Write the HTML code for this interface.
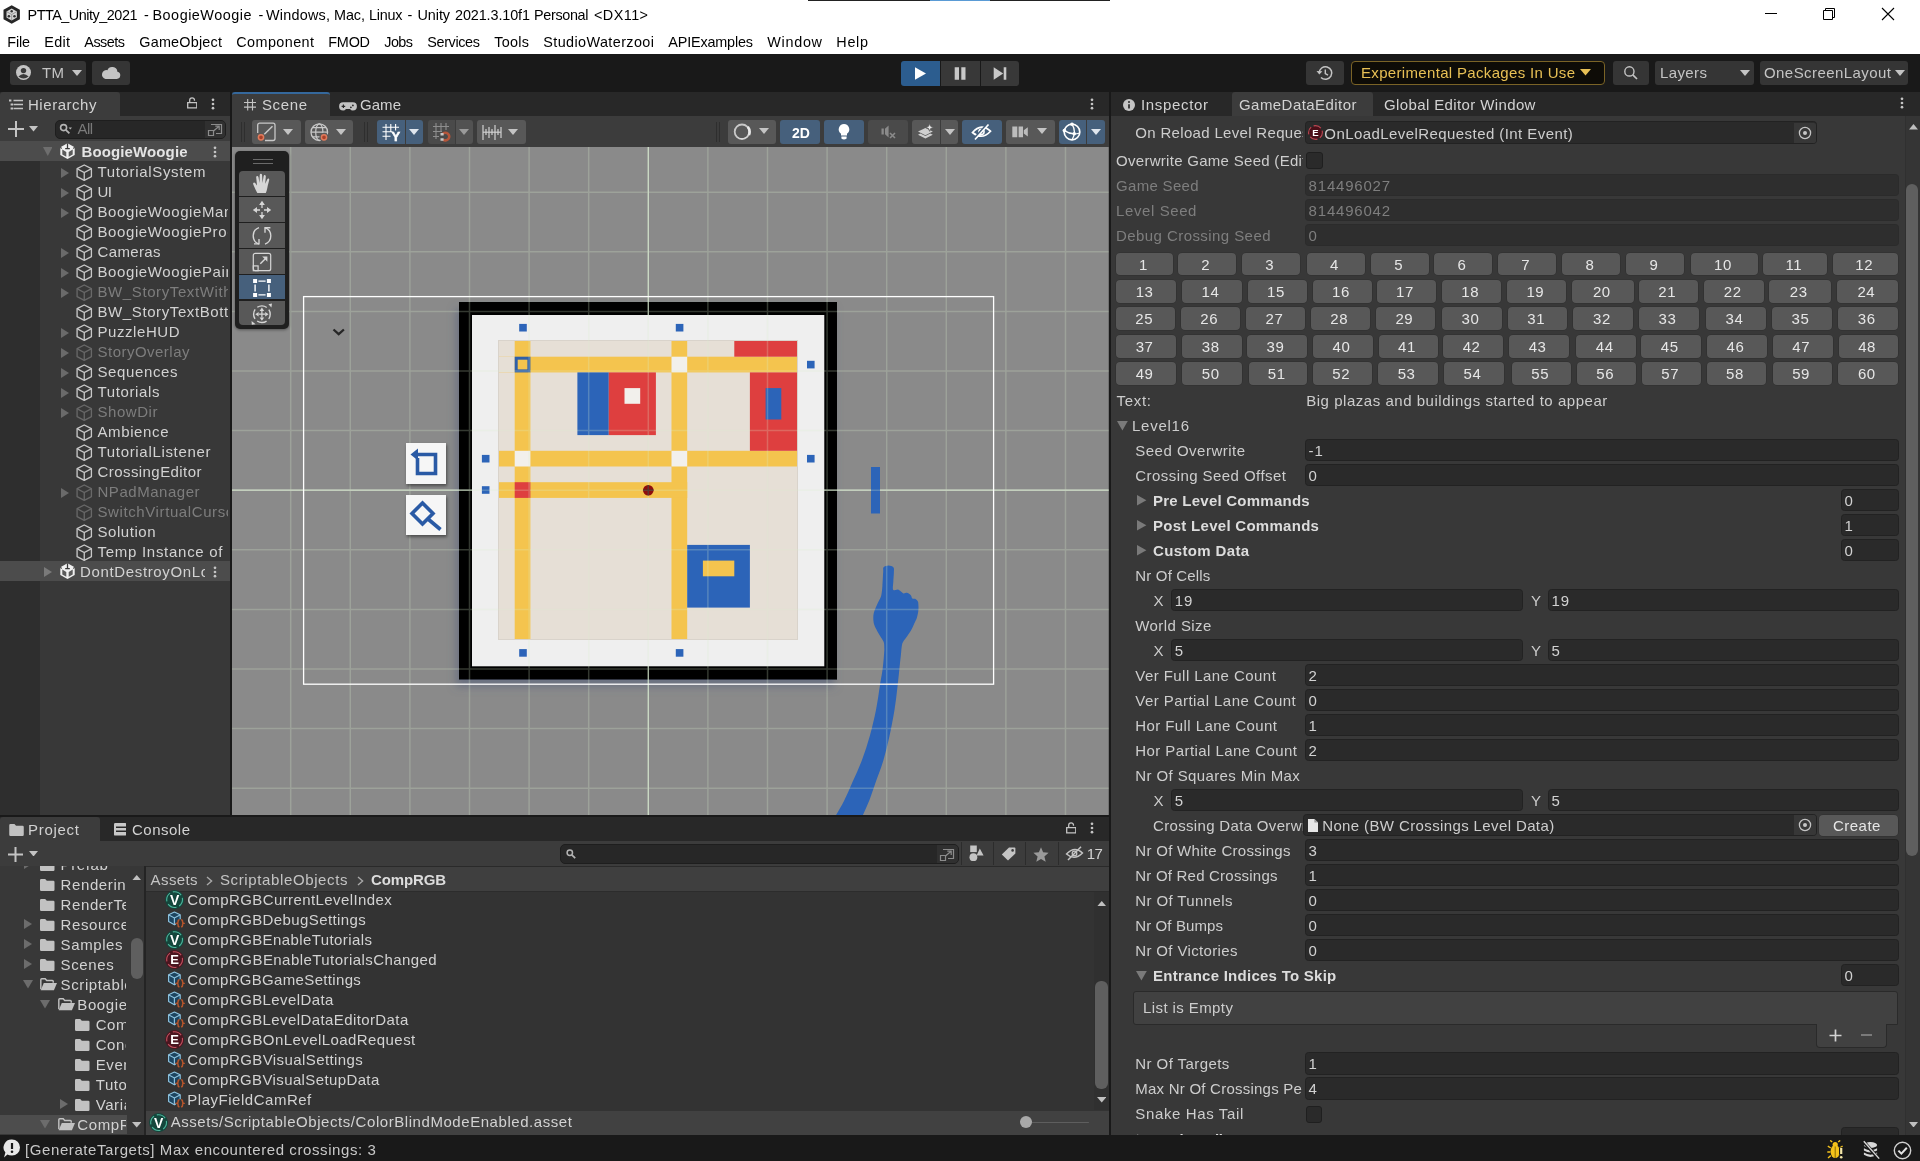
<!DOCTYPE html>
<html><head><meta charset="utf-8"><title>Unity</title>
<style>
html,body{margin:0;padding:0}
body{width:1920px;height:1161px;overflow:hidden;background:#191919;position:relative;font-family:"Liberation Sans",sans-serif;font-size:15px;color:#d2d2d2}
div,span,svg{position:absolute;box-sizing:border-box}
.t{white-space:nowrap;line-height:20px;height:20px;letter-spacing:.5px;color:#d2d2d2}
.b{font-weight:bold;letter-spacing:.25px}
.g{color:#8a8a8a}
.dis{color:#7d7d7d}
.clip{overflow:hidden}
.fld{background:#2a2a2a;border:1px solid #212121;border-radius:3px}
.btn{background:#585858;border-radius:3px;border:1px solid #303030}
.blue{background:#46607c}
.nb{background:#585858;border-radius:4px;text-align:center;color:#e6e6e6;line-height:23px;letter-spacing:.6px;white-space:nowrap;box-shadow:0 0 0 .6px #2f2f2f;padding-right:2.6px}
.tabbar{background:#282828}
.tab{background:#3c3c3c}
</style></head>
<body>
<div id="w" style="left:0;top:0;width:1920px;height:1161px;will-change:transform">
<!-- gen_header -->
<div style="left:0px;top:0px;width:1920px;height:53.5px;background:#fff"></div>
<div style="left:808px;top:0px;width:302px;height:1px;background:#222"></div>
<div style="left:930px;top:0px;width:60px;height:1px;background:#5a9bd5"></div>
<svg style="left:3.4px;top:4.6px;" width="17.4" height="19" viewBox="0 0 17.4 19"><path d="M8.7 0.2L16.9 4.8V14.2L8.7 18.8L0.5 14.2V4.8Z" fill="#262626"/><path d="M8.7 3.6L13.9 6.6V12.4L8.7 15.4L3.5 12.4V6.6Z" fill="#d6d6d6"/><path d="M8.7 9.5V15M8.7 9.5L3.9 6.8M8.7 9.5L13.5 6.8" stroke="#8a8a8a" stroke-width=".8" fill="none"/><circle cx="8.7" cy="6.3" r="1.2" fill="#333"/><circle cx="5.9" cy="11.2" r="1.3" fill="#333"/><circle cx="11.5" cy="11.2" r="1.3" fill="#333"/></svg>
<span class="t " style="left:27.5px;top:4.800000000000001px;letter-spacing:-0.47px;font-size:14.4px;color:#000">PTTA_Unity_2021</span>
<span class="t " style="left:144px;top:4.800000000000001px;letter-spacing:1.20px;font-size:14.4px;color:#000">-</span>
<span class="t " style="left:152.5px;top:4.800000000000001px;letter-spacing:0.51px;font-size:14.4px;color:#000">BoogieWoogie</span>
<span class="t " style="left:258.5px;top:4.800000000000001px;letter-spacing:1.20px;font-size:14.4px;color:#000">-</span>
<span class="t " style="left:266px;top:4.800000000000001px;letter-spacing:0.23px;font-size:14.4px;color:#000">Windows,</span>
<span class="t " style="left:334px;top:4.800000000000001px;letter-spacing:-0.06px;font-size:14.4px;color:#000">Mac,</span>
<span class="t " style="left:369px;top:4.800000000000001px;letter-spacing:-0.23px;font-size:14.4px;color:#000">Linux</span>
<span class="t " style="left:407.5px;top:4.800000000000001px;letter-spacing:1.20px;font-size:14.4px;color:#000">-</span>
<span class="t " style="left:417.5px;top:4.800000000000001px;letter-spacing:-0.07px;font-size:14.4px;color:#000">Unity</span>
<span class="t " style="left:455px;top:4.800000000000001px;letter-spacing:-0.10px;font-size:14.4px;color:#000">2021.3.10f1</span>
<span class="t " style="left:534px;top:4.800000000000001px;letter-spacing:-0.33px;font-size:14.4px;color:#000">Personal</span>
<span class="t " style="left:594px;top:4.800000000000001px;letter-spacing:0.45px;font-size:14.4px;color:#000">&lt;DX11&gt;</span>
<span class="t " style="left:7.3px;top:31.700000000000003px;letter-spacing:-0.17px;font-size:14.4px;color:#000">File</span>
<span class="t " style="left:44.3px;top:31.700000000000003px;letter-spacing:0.30px;font-size:14.4px;color:#000">Edit</span>
<span class="t " style="left:84.3px;top:31.700000000000003px;letter-spacing:-0.50px;font-size:14.4px;color:#000">Assets</span>
<span class="t " style="left:139.3px;top:31.700000000000003px;letter-spacing:0.21px;font-size:14.4px;color:#000">GameObject</span>
<span class="t " style="left:236.3px;top:31.700000000000003px;letter-spacing:0.41px;font-size:14.4px;color:#000">Component</span>
<span class="t " style="left:328.3px;top:31.700000000000003px;letter-spacing:-0.22px;font-size:14.4px;color:#000">FMOD</span>
<span class="t " style="left:384.3px;top:31.700000000000003px;letter-spacing:-0.57px;font-size:14.4px;color:#000">Jobs</span>
<span class="t " style="left:427.3px;top:31.700000000000003px;letter-spacing:-0.36px;font-size:14.4px;color:#000">Services</span>
<span class="t " style="left:494.3px;top:31.700000000000003px;letter-spacing:0.28px;font-size:14.4px;color:#000">Tools</span>
<span class="t " style="left:543.3px;top:31.700000000000003px;letter-spacing:0.40px;font-size:14.4px;color:#000">StudioWaterzooi</span>
<span class="t " style="left:668.3px;top:31.700000000000003px;letter-spacing:-0.17px;font-size:14.4px;color:#000">APIExamples</span>
<span class="t " style="left:767.3px;top:31.700000000000003px;letter-spacing:0.70px;font-size:14.4px;color:#000">Window</span>
<span class="t " style="left:836.3px;top:31.700000000000003px;letter-spacing:0.70px;font-size:14.4px;color:#000">Help</span>
<svg style="left:1760px;top:4px;" width="140" height="22" viewBox="0 0 140 22"><path d="M5 9.5H17" stroke="#000" stroke-width="1"/><path d="M63.5 6.5H72.5V15.5H63.5ZM65.5 6.5V4.5H74.5V13.5H72.5" stroke="#000" stroke-width="1" fill="none"/><path d="M122 4L134 16M134 4L122 16" stroke="#000" stroke-width="1.1"/></svg>
<div style="left:0px;top:53.5px;width:1920px;height:38.5px;background:#191919"></div>
<div style="left:10px;top:61px;width:76px;height:23.5px;background:#353535;border-radius:3px;"></div>
<svg style="left:16px;top:65px;" width="15" height="15" viewBox="0 0 15 15"><circle cx="7.5" cy="7.5" r="7.5" fill="#c4c4c4"/><circle cx="7.5" cy="5.6" r="2.7" fill="#383838"/><path d="M2.4 11.6Q7.5 6.6 12.6 11.6Q7.5 15.6 2.4 11.6Z" fill="#383838"/></svg>
<span class="t " style="left:42px;top:62.5px;letter-spacing:0.33px;color:#c4c4c4">TM</span>
<svg style="left:72.0px;top:70.0px;" width="10" height="6" viewBox="0 0 10 6"><path d="M0 0H10L5.0 6Z" fill="#c4c4c4"/></svg>
<div style="left:92px;top:61px;width:38px;height:23.5px;background:#353535;border-radius:3px;"></div>
<svg style="left:101px;top:65px;" width="20" height="15" viewBox="0 0 20 15"><path d="M4.5 14H15.8A3.7 3.7 0 0 0 16.4 6.7A5.2 5.2 0 0 0 6.4 5.2A4.4 4.4 0 0 0 4.5 14Z" fill="#c4c4c4"/></svg>
<div style="left:901px;top:61px;width:38.5px;height:25px;background:#2c5d8f;border-radius:3px 0 0 3px"></div>
<div style="left:940.5px;top:61px;width:39px;height:25px;background:#383838"></div>
<div style="left:980.5px;top:61px;width:38.5px;height:25px;background:#383838;border-radius:0 3px 3px 0"></div>
<svg style="left:901px;top:61px;" width="118" height="25" viewBox="0 0 118 25"><path d="M14 6.3V18.7L25 12.5Z" fill="#fff"/><path d="M53.7 6.3H58V18.7H53.7ZM60.3 6.3H64.5V18.7H60.3Z" fill="#c8c8c8"/><path d="M92.7 6.3V18.7L102.2 12.5ZM102.7 6.3H105.3V18.7H102.7Z" fill="#c8c8c8"/></svg>
<div style="left:1306px;top:61px;width:37.5px;height:23.5px;background:#353535;border-radius:3px;"></div>
<svg style="left:1316px;top:64px;" width="18" height="18" viewBox="0 0 18 18"><path d="M3.2 9A6.3 6.3 0 1 1 5 13.4" stroke="#c4c4c4" stroke-width="1.5" fill="none"/><path d="M0.5 7L3.3 10.6L6.4 7.2Z" fill="#c4c4c4"/><path d="M9.3 5.5V9.5L12 11.2" stroke="#c4c4c4" stroke-width="1.4" fill="none"/></svg>
<div style="left:1351px;top:60.5px;width:253.5px;height:24.5px;background:#0e0c07;border:1px solid #7a6326;border-radius:4px"></div>
<span class="t " style="left:1361px;top:62.5px;letter-spacing:0.33px;color:#e8c055">Experimental Packages In Use</span>
<svg style="left:1579.5px;top:69.25px;" width="11" height="6.5" viewBox="0 0 11 6.5"><path d="M0 0H11L5.5 6.5Z" fill="#e8c055"/></svg>
<div style="left:1613px;top:61px;width:36px;height:23.5px;background:#353535;border-radius:3px;"></div>
<svg style="left:1623px;top:65px;" width="16" height="16" viewBox="0 0 16 16"><circle cx="6.4" cy="6.4" r="4.6" stroke="#c4c4c4" stroke-width="1.4" fill="none"/><path d="M9.8 9.8L14 14" stroke="#c4c4c4" stroke-width="1.7"/></svg>
<div style="left:1655px;top:61px;width:98.5px;height:23.5px;background:#353535;border-radius:3px;"></div>
<span class="t " style="left:1660px;top:62.5px;letter-spacing:0.39px;color:#c4c4c4">Layers</span>
<svg style="left:1740.0px;top:70.0px;" width="10" height="6" viewBox="0 0 10 6"><path d="M0 0H10L5.0 6Z" fill="#c4c4c4"/></svg>
<div style="left:1760px;top:61px;width:147.5px;height:23.5px;background:#353535;border-radius:3px;"></div>
<span class="t " style="left:1764px;top:62.5px;letter-spacing:0.43px;color:#c4c4c4">OneScreenLayout</span>
<svg style="left:1894.5px;top:70.0px;" width="10" height="6" viewBox="0 0 10 6"><path d="M0 0H10L5.0 6Z" fill="#c4c4c4"/></svg>
<!-- gen_hier -->
<div style="left:0px;top:92px;width:230px;height:723px;background:#383838"></div>
<div class="tabbar" style="left:0px;top:92px;width:230px;height:24px;"></div>
<div class="tab" style="left:0px;top:92px;width:120px;height:24px;border-radius:3px 3px 0 0"></div>
<svg style="left:9px;top:99px;" width="14" height="11" viewBox="0 0 14 11"><path d="M4.5 1.5H14M4.5 5.5H14M4.5 9.5H14" stroke="#c4c4c4" stroke-width="1.5"/><path d="M0 0.6H2.4V2.6H0ZM1.6 4.5H4V6.5H1.6ZM1.6 8.5H4V10.5H1.6Z" fill="#c4c4c4"/></svg>
<span class="t " style="left:28px;top:94.7px;letter-spacing:0.54px;">Hierarchy</span>
<svg style="left:186.7px;top:97.3px;" width="10.5" height="11.5" viewBox="0 0 10.5 11.5"><path d="M0.7 5.6H9.8V10.8H0.7Z" fill="none" stroke="#c4c4c4" stroke-width="1.3"/><path d="M2.7 5.6V3.2A2.4 2.4 0 0 1 7.5 3.2V3.8" fill="none" stroke="#c4c4c4" stroke-width="1.3"/></svg>
<svg style="left:211px;top:97.5px;" width="4" height="12" viewBox="0 0 4 12"><circle cx="2" cy="1.8" r="1.35" fill="#c4c4c4"/><circle cx="2" cy="6" r="1.35" fill="#c4c4c4"/><circle cx="2" cy="10.2" r="1.35" fill="#c4c4c4"/></svg>
<div style="left:0px;top:116px;width:230px;height:25px;background:#3c3c3c"></div>
<svg style="left:8px;top:121px;" width="16" height="16" viewBox="0 0 16 16"><path d="M8 0V16M0 8H16" stroke="#c4c4c4" stroke-width="2"/></svg>
<svg style="left:29.0px;top:126.05000000000001px;" width="9" height="5.5" viewBox="0 0 9 5.5"><path d="M0 0H9L4.5 5.5Z" fill="#c4c4c4"/></svg>
<div style="left:54.5px;top:119.5px;width:171px;height:19px;background:#272727;border:1px solid #1e1e1e;border-radius:5px"></div>
<div style="left:205px;top:120.5px;width:19.5px;height:17px;background:#303030;border-radius:0 4px 4px 0"></div>
<svg style="left:59px;top:123px;" width="14" height="12" viewBox="0 0 14 12"><circle cx="4.6" cy="4.6" r="3" fill="none" stroke="#b4b4b4" stroke-width="1.6"/><path d="M6.8 6.8L10.4 10.4" stroke="#b4b4b4" stroke-width="1.8"/><path d="M9.6 4.4H13L11.3 6.4Z" fill="#b4b4b4"/></svg>
<span class="t " style="left:77.5px;top:119px;letter-spacing:-0.60px;color:#7a7a7a">All</span>
<svg style="left:207px;top:121px;" width="16" height="16" viewBox="0 0 16 16"><path d="M4 3.5H14.5V12.5H9" fill="none" stroke="#8c8c8c" stroke-width="1.2"/><path d="M1.5 9.5H6.5V14.5H1.5Z" fill="none" stroke="#8c8c8c" stroke-width="1.2"/><path d="M6.5 10L11.8 5.5M8.3 5.2H12.2V9" fill="none" stroke="#8c8c8c" stroke-width="1.2"/></svg>
<div style="left:0px;top:161px;width:40px;height:654px;background:#2e2e2e"></div>
<div style="left:0px;top:141px;width:230px;height:20px;background:#4c4c4c"></div>
<svg style="left:42.95px;top:147.1px;" width="9.5" height="9" viewBox="0 0 9.5 9"><path d="M0 0H9.5L4.75 9Z" fill="#6e6e6e"/></svg>
<svg style="left:60px;top:143.3px;" width="15" height="16" viewBox="0 0 15 15.4"><path d="M7.5 0L14.7 3.9V11.7L7.5 15.6L0.3 11.7V3.9Z" fill="#f0f0f0"/><path d="M2.3 6.3L6.3 8.6V13.4L2.3 11.1ZM12.7 6.3L8.7 8.6V13.4L12.7 11.1Z" fill="#5a5a5a"/><path d="M7.5 0V5.6M5.2 5.3H9.8" stroke="#3a3a3a" stroke-width="1.3" fill="none"/><path d="M0 3.2L1.6 5.4M15 3.2L13.4 5.4" stroke="#4c4c4c" stroke-width="1.2"/></svg>
<span class="t b " style="left:81.5px;top:142px;letter-spacing:0.12px;color:#e4e4e4">BoogieWoogie</span>
<svg style="left:212.5px;top:145.5px;" width="4" height="12" viewBox="0 0 4 12"><circle cx="2" cy="1.8" r="1.35" fill="#c4c4c4"/><circle cx="2" cy="6" r="1.35" fill="#c4c4c4"/><circle cx="2" cy="10.2" r="1.35" fill="#c4c4c4"/></svg>
<svg style="left:61.3px;top:167.5px;" width="8" height="10" viewBox="0 0 8 10"><path d="M0 0V10L8 5.0Z" fill="#6a6a6a"/></svg>
<svg style="left:76px;top:163.6px;" width="16.5" height="17.4" viewBox="0 0 16 17"><path d="M8 1L15 4.6V12.4L8 16L1 12.4V4.6Z" fill="none" stroke="#c8c8c8" stroke-width="1.3" stroke-linejoin="round"/><path d="M1.3 4.8L8 8.3L14.7 4.8M8 8.3V15.7" fill="none" stroke="#c8c8c8" stroke-width="1.3"/></svg>
<span class="t " style="left:97.5px;top:162px;letter-spacing:0.66px;color:#d2d2d2">TutorialSystem</span>
<svg style="left:61.3px;top:187.5px;" width="8" height="10" viewBox="0 0 8 10"><path d="M0 0V10L8 5.0Z" fill="#6a6a6a"/></svg>
<svg style="left:76px;top:183.6px;" width="16.5" height="17.4" viewBox="0 0 16 17"><path d="M8 1L15 4.6V12.4L8 16L1 12.4V4.6Z" fill="none" stroke="#c8c8c8" stroke-width="1.3" stroke-linejoin="round"/><path d="M1.3 4.8L8 8.3L14.7 4.8M8 8.3V15.7" fill="none" stroke="#c8c8c8" stroke-width="1.3"/></svg>
<span class="t " style="left:97.5px;top:182px;letter-spacing:-0.60px;color:#d2d2d2">UI</span>
<svg style="left:61.3px;top:207.5px;" width="8" height="10" viewBox="0 0 8 10"><path d="M0 0V10L8 5.0Z" fill="#6a6a6a"/></svg>
<svg style="left:76px;top:203.6px;" width="16.5" height="17.4" viewBox="0 0 16 17"><path d="M8 1L15 4.6V12.4L8 16L1 12.4V4.6Z" fill="none" stroke="#c8c8c8" stroke-width="1.3" stroke-linejoin="round"/><path d="M1.3 4.8L8 8.3L14.7 4.8M8 8.3V15.7" fill="none" stroke="#c8c8c8" stroke-width="1.3"/></svg>
<span class="t clip" style="left:97.5px;top:202px;width:130.5px;letter-spacing:.6px;color:#d2d2d2">BoogieWoogieManager</span>
<svg style="left:76px;top:223.6px;" width="16.5" height="17.4" viewBox="0 0 16 17"><path d="M8 1L15 4.6V12.4L8 16L1 12.4V4.6Z" fill="none" stroke="#c8c8c8" stroke-width="1.3" stroke-linejoin="round"/><path d="M1.3 4.8L8 8.3L14.7 4.8M8 8.3V15.7" fill="none" stroke="#c8c8c8" stroke-width="1.3"/></svg>
<span class="t clip" style="left:97.5px;top:222px;width:130.5px;letter-spacing:.6px;color:#d2d2d2">BoogieWoogieProgress</span>
<svg style="left:61.3px;top:247.5px;" width="8" height="10" viewBox="0 0 8 10"><path d="M0 0V10L8 5.0Z" fill="#6a6a6a"/></svg>
<svg style="left:76px;top:243.6px;" width="16.5" height="17.4" viewBox="0 0 16 17"><path d="M8 1L15 4.6V12.4L8 16L1 12.4V4.6Z" fill="none" stroke="#c8c8c8" stroke-width="1.3" stroke-linejoin="round"/><path d="M1.3 4.8L8 8.3L14.7 4.8M8 8.3V15.7" fill="none" stroke="#c8c8c8" stroke-width="1.3"/></svg>
<span class="t " style="left:97.5px;top:242px;letter-spacing:0.36px;color:#d2d2d2">Cameras</span>
<svg style="left:61.3px;top:267.5px;" width="8" height="10" viewBox="0 0 8 10"><path d="M0 0V10L8 5.0Z" fill="#6a6a6a"/></svg>
<svg style="left:76px;top:263.6px;" width="16.5" height="17.4" viewBox="0 0 16 17"><path d="M8 1L15 4.6V12.4L8 16L1 12.4V4.6Z" fill="none" stroke="#c8c8c8" stroke-width="1.3" stroke-linejoin="round"/><path d="M1.3 4.8L8 8.3L14.7 4.8M8 8.3V15.7" fill="none" stroke="#c8c8c8" stroke-width="1.3"/></svg>
<span class="t clip" style="left:97.5px;top:262px;width:130.5px;letter-spacing:.6px;color:#d2d2d2">BoogieWoogiePainting</span>
<svg style="left:61.3px;top:287.5px;" width="8" height="10" viewBox="0 0 8 10"><path d="M0 0V10L8 5.0Z" fill="#6a6a6a"/></svg>
<svg style="left:76px;top:283.6px;" width="16.5" height="17.4" viewBox="0 0 16 17"><path d="M8 1L15 4.6V12.4L8 16L1 12.4V4.6Z" fill="none" stroke="#686868" stroke-width="1.3" stroke-linejoin="round"/><path d="M1.3 4.8L8 8.3L14.7 4.8M8 8.3V15.7" fill="none" stroke="#686868" stroke-width="1.3"/></svg>
<span class="t clip" style="left:97.5px;top:282px;width:130.5px;letter-spacing:.6px;color:#7d7d7d">BW_StoryTextWithImage</span>
<svg style="left:76px;top:303.6px;" width="16.5" height="17.4" viewBox="0 0 16 17"><path d="M8 1L15 4.6V12.4L8 16L1 12.4V4.6Z" fill="none" stroke="#c8c8c8" stroke-width="1.3" stroke-linejoin="round"/><path d="M1.3 4.8L8 8.3L14.7 4.8M8 8.3V15.7" fill="none" stroke="#c8c8c8" stroke-width="1.3"/></svg>
<span class="t clip" style="left:97.5px;top:302px;width:130.5px;letter-spacing:.6px;color:#d2d2d2">BW_StoryTextBottom</span>
<svg style="left:61.3px;top:327.5px;" width="8" height="10" viewBox="0 0 8 10"><path d="M0 0V10L8 5.0Z" fill="#6a6a6a"/></svg>
<svg style="left:76px;top:323.6px;" width="16.5" height="17.4" viewBox="0 0 16 17"><path d="M8 1L15 4.6V12.4L8 16L1 12.4V4.6Z" fill="none" stroke="#c8c8c8" stroke-width="1.3" stroke-linejoin="round"/><path d="M1.3 4.8L8 8.3L14.7 4.8M8 8.3V15.7" fill="none" stroke="#c8c8c8" stroke-width="1.3"/></svg>
<span class="t " style="left:97.5px;top:322px;letter-spacing:0.56px;color:#d2d2d2">PuzzleHUD</span>
<svg style="left:61.3px;top:347.5px;" width="8" height="10" viewBox="0 0 8 10"><path d="M0 0V10L8 5.0Z" fill="#6a6a6a"/></svg>
<svg style="left:76px;top:343.6px;" width="16.5" height="17.4" viewBox="0 0 16 17"><path d="M8 1L15 4.6V12.4L8 16L1 12.4V4.6Z" fill="none" stroke="#686868" stroke-width="1.3" stroke-linejoin="round"/><path d="M1.3 4.8L8 8.3L14.7 4.8M8 8.3V15.7" fill="none" stroke="#686868" stroke-width="1.3"/></svg>
<span class="t " style="left:97.5px;top:342px;letter-spacing:0.48px;color:#7d7d7d">StoryOverlay</span>
<svg style="left:61.3px;top:367.5px;" width="8" height="10" viewBox="0 0 8 10"><path d="M0 0V10L8 5.0Z" fill="#6a6a6a"/></svg>
<svg style="left:76px;top:363.6px;" width="16.5" height="17.4" viewBox="0 0 16 17"><path d="M8 1L15 4.6V12.4L8 16L1 12.4V4.6Z" fill="none" stroke="#c8c8c8" stroke-width="1.3" stroke-linejoin="round"/><path d="M1.3 4.8L8 8.3L14.7 4.8M8 8.3V15.7" fill="none" stroke="#c8c8c8" stroke-width="1.3"/></svg>
<span class="t " style="left:97.5px;top:362px;letter-spacing:0.62px;color:#d2d2d2">Sequences</span>
<svg style="left:61.3px;top:387.5px;" width="8" height="10" viewBox="0 0 8 10"><path d="M0 0V10L8 5.0Z" fill="#6a6a6a"/></svg>
<svg style="left:76px;top:383.6px;" width="16.5" height="17.4" viewBox="0 0 16 17"><path d="M8 1L15 4.6V12.4L8 16L1 12.4V4.6Z" fill="none" stroke="#c8c8c8" stroke-width="1.3" stroke-linejoin="round"/><path d="M1.3 4.8L8 8.3L14.7 4.8M8 8.3V15.7" fill="none" stroke="#c8c8c8" stroke-width="1.3"/></svg>
<span class="t " style="left:97.5px;top:382px;letter-spacing:0.63px;color:#d2d2d2">Tutorials</span>
<svg style="left:61.3px;top:407.5px;" width="8" height="10" viewBox="0 0 8 10"><path d="M0 0V10L8 5.0Z" fill="#6a6a6a"/></svg>
<svg style="left:76px;top:403.6px;" width="16.5" height="17.4" viewBox="0 0 16 17"><path d="M8 1L15 4.6V12.4L8 16L1 12.4V4.6Z" fill="none" stroke="#686868" stroke-width="1.3" stroke-linejoin="round"/><path d="M1.3 4.8L8 8.3L14.7 4.8M8 8.3V15.7" fill="none" stroke="#686868" stroke-width="1.3"/></svg>
<span class="t " style="left:97.5px;top:402px;letter-spacing:0.55px;color:#7d7d7d">ShowDir</span>
<svg style="left:76px;top:423.6px;" width="16.5" height="17.4" viewBox="0 0 16 17"><path d="M8 1L15 4.6V12.4L8 16L1 12.4V4.6Z" fill="none" stroke="#c8c8c8" stroke-width="1.3" stroke-linejoin="round"/><path d="M1.3 4.8L8 8.3L14.7 4.8M8 8.3V15.7" fill="none" stroke="#c8c8c8" stroke-width="1.3"/></svg>
<span class="t " style="left:97.5px;top:422px;letter-spacing:0.61px;color:#d2d2d2">Ambience</span>
<svg style="left:76px;top:443.6px;" width="16.5" height="17.4" viewBox="0 0 16 17"><path d="M8 1L15 4.6V12.4L8 16L1 12.4V4.6Z" fill="none" stroke="#c8c8c8" stroke-width="1.3" stroke-linejoin="round"/><path d="M1.3 4.8L8 8.3L14.7 4.8M8 8.3V15.7" fill="none" stroke="#c8c8c8" stroke-width="1.3"/></svg>
<span class="t " style="left:97.5px;top:442px;letter-spacing:0.68px;color:#d2d2d2">TutorialListener</span>
<svg style="left:76px;top:463.6px;" width="16.5" height="17.4" viewBox="0 0 16 17"><path d="M8 1L15 4.6V12.4L8 16L1 12.4V4.6Z" fill="none" stroke="#c8c8c8" stroke-width="1.3" stroke-linejoin="round"/><path d="M1.3 4.8L8 8.3L14.7 4.8M8 8.3V15.7" fill="none" stroke="#c8c8c8" stroke-width="1.3"/></svg>
<span class="t " style="left:97.5px;top:462px;letter-spacing:0.43px;color:#d2d2d2">CrossingEditor</span>
<svg style="left:61.3px;top:487.5px;" width="8" height="10" viewBox="0 0 8 10"><path d="M0 0V10L8 5.0Z" fill="#6a6a6a"/></svg>
<svg style="left:76px;top:483.6px;" width="16.5" height="17.4" viewBox="0 0 16 17"><path d="M8 1L15 4.6V12.4L8 16L1 12.4V4.6Z" fill="none" stroke="#686868" stroke-width="1.3" stroke-linejoin="round"/><path d="M1.3 4.8L8 8.3L14.7 4.8M8 8.3V15.7" fill="none" stroke="#686868" stroke-width="1.3"/></svg>
<span class="t " style="left:97.5px;top:482px;letter-spacing:0.53px;color:#7d7d7d">NPadManager</span>
<svg style="left:76px;top:503.6px;" width="16.5" height="17.4" viewBox="0 0 16 17"><path d="M8 1L15 4.6V12.4L8 16L1 12.4V4.6Z" fill="none" stroke="#686868" stroke-width="1.3" stroke-linejoin="round"/><path d="M1.3 4.8L8 8.3L14.7 4.8M8 8.3V15.7" fill="none" stroke="#686868" stroke-width="1.3"/></svg>
<span class="t clip" style="left:97.5px;top:502px;width:130.5px;letter-spacing:.6px;color:#7d7d7d">SwitchVirtualCursor</span>
<svg style="left:76px;top:523.6px;" width="16.5" height="17.4" viewBox="0 0 16 17"><path d="M8 1L15 4.6V12.4L8 16L1 12.4V4.6Z" fill="none" stroke="#c8c8c8" stroke-width="1.3" stroke-linejoin="round"/><path d="M1.3 4.8L8 8.3L14.7 4.8M8 8.3V15.7" fill="none" stroke="#c8c8c8" stroke-width="1.3"/></svg>
<span class="t " style="left:97.5px;top:522px;letter-spacing:0.54px;color:#d2d2d2">Solution</span>
<svg style="left:76px;top:543.6px;" width="16.5" height="17.4" viewBox="0 0 16 17"><path d="M8 1L15 4.6V12.4L8 16L1 12.4V4.6Z" fill="none" stroke="#c8c8c8" stroke-width="1.3" stroke-linejoin="round"/><path d="M1.3 4.8L8 8.3L14.7 4.8M8 8.3V15.7" fill="none" stroke="#c8c8c8" stroke-width="1.3"/></svg>
<span class="t " style="left:97.5px;top:542px;letter-spacing:0.72px;color:#d2d2d2">Temp Instance of</span>
<div style="left:0px;top:561px;width:230px;height:20px;background:#4c4c4c"></div>
<svg style="left:43.5px;top:566.5px;" width="8" height="10" viewBox="0 0 8 10"><path d="M0 0V10L8 5.0Z" fill="#7a7a7a"/></svg>
<svg style="left:60px;top:563.3px;" width="15" height="16" viewBox="0 0 15 15.4"><path d="M7.5 0L14.7 3.9V11.7L7.5 15.6L0.3 11.7V3.9Z" fill="#f0f0f0"/><path d="M2.3 6.3L6.3 8.6V13.4L2.3 11.1ZM12.7 6.3L8.7 8.6V13.4L12.7 11.1Z" fill="#5a5a5a"/><path d="M7.5 0V5.6M5.2 5.3H9.8" stroke="#3a3a3a" stroke-width="1.3" fill="none"/><path d="M0 3.2L1.6 5.4M15 3.2L13.4 5.4" stroke="#4c4c4c" stroke-width="1.2"/></svg>
<span class="t clip" style="left:80px;top:562px;width:125px;letter-spacing:.65px">DontDestroyOnLoad</span>
<svg style="left:212.5px;top:565.5px;" width="4" height="12" viewBox="0 0 4 12"><circle cx="2" cy="1.8" r="1.35" fill="#c4c4c4"/><circle cx="2" cy="6" r="1.35" fill="#c4c4c4"/><circle cx="2" cy="10.2" r="1.35" fill="#c4c4c4"/></svg>
<!-- gen_scene -->
<div style="left:232px;top:92px;width:876.7px;height:723px;background:#3c3c3c"></div>
<div class="tabbar" style="left:232px;top:92px;width:876.7px;height:24px;"></div>
<div class="tab" style="left:232px;top:92px;width:98px;height:24px;border-radius:3px 3px 0 0;border-top:2px solid #35689c"></div>
<svg style="left:243.5px;top:99.2px;" width="12.4" height="11.6" viewBox="0 0 12.4 11.6"><path d="M3.7 0V11.6M8.5 0V11.6M0 3.5H12.4M0 8.1H12.4" stroke="#c4c4c4" stroke-width="1.1"/></svg>
<span class="t " style="left:262px;top:94.7px;letter-spacing:0.61px;">Scene</span>
<svg style="left:339px;top:101.6px;" width="18" height="9" viewBox="0 0 18 9"><path d="M4.2 0.3H13.8A4.1 4.1 0 0 1 13.8 8.5Q12.2 8.5 11 7H7Q5.8 8.5 4.2 8.5A4.1 4.1 0 0 1 4.2 0.3Z" fill="#c4c4c4"/><path d="M2.6 4.3H6.2M4.4 2.5V6.1" stroke="#282828" stroke-width="1.2"/><circle cx="11.9" cy="5.3" r=".9" fill="#282828"/><circle cx="13.9" cy="3.4" r=".9" fill="#282828"/></svg>
<span class="t " style="left:360px;top:94.7px;letter-spacing:0.05px;">Game</span>
<svg style="left:1090px;top:97.5px;" width="4" height="12" viewBox="0 0 4 12"><circle cx="2" cy="1.8" r="1.35" fill="#c4c4c4"/><circle cx="2" cy="6" r="1.35" fill="#c4c4c4"/><circle cx="2" cy="10.2" r="1.35" fill="#c4c4c4"/></svg>
<div style="left:232px;top:116px;width:876.7px;height:31px;background:#3c3c3c"></div>
<div style="left:240.5px;top:122px;width:1.2px;height:20px;background:#2e2e2e"></div>
<div style="left:244px;top:122px;width:1.2px;height:20px;background:#2e2e2e"></div>
<div style="left:363.5px;top:122px;width:1.2px;height:20px;background:#2e2e2e"></div>
<div style="left:367px;top:122px;width:1.2px;height:20px;background:#2e2e2e"></div>
<div style="left:716px;top:122px;width:1.2px;height:20px;background:#2e2e2e"></div>
<div style="left:719.3px;top:122px;width:1.2px;height:20px;background:#2e2e2e"></div>
<div style="left:252px;top:120px;width:49px;height:23.8px;background:#585858;border-radius:3px"></div>
<svg style="left:255px;top:121px;" width="22" height="22" viewBox="0 0 22 22"><rect x="2.7" y="2.2" width="17.3" height="17.3" rx="2" fill="none" stroke="#c8c8c8" stroke-width="1.3"/><rect x="1" y="12" width="9" height="9" fill="#585858"/><path d="M9.3 13.3L17.5 5.2" stroke="#c8c8c8" stroke-width="1.5"/><circle cx="6" cy="16.3" r="2.6" fill="#a8412a" stroke="#e07b5c" stroke-width="1.5"/></svg>
<svg style="left:283.0px;top:129.0px;" width="10" height="6" viewBox="0 0 10 6"><path d="M0 0H10L5.0 6Z" fill="#c4c4c4"/></svg>
<div style="left:305px;top:120px;width:48px;height:23.8px;background:#585858;border-radius:3px"></div>
<svg style="left:309px;top:122px;" width="22" height="21" viewBox="0 0 22 21"><circle cx="10.3" cy="10.2" r="8.3" fill="none" stroke="#c8c8c8" stroke-width="1.3"/><ellipse cx="10.3" cy="10.2" rx="3.6" ry="8.3" fill="none" stroke="#c8c8c8" stroke-width="1.2"/><path d="M2 10.2H18.6M3.5 5.6H17M3.5 14.8H17" stroke="#c8c8c8" stroke-width="1.2"/><circle cx="15" cy="15.3" r="4.6" fill="#585858"/><circle cx="15" cy="15.3" r="2.6" fill="#a8412a" stroke="#e07b5c" stroke-width="1.5"/></svg>
<svg style="left:335.5px;top:129.0px;" width="10" height="6" viewBox="0 0 10 6"><path d="M0 0H10L5.0 6Z" fill="#c4c4c4"/></svg>
<div style="left:376.5px;top:120px;width:28.8px;height:23.8px;background:#46607c;border-radius:3px 0 0 3px"></div>
<div style="left:406px;top:120px;width:17px;height:23.8px;background:#46607c;border-radius:0 3px 3px 0"></div>
<svg style="left:380px;top:122px;" width="24" height="21" viewBox="0 0 24 21"><path d="M6 2V18M10.8 2V10M15.6 2V8.5M2.5 5.2H19M2.5 9.7H12.5M2.5 14.2H10.5" stroke="#fff" stroke-width="1.1"/><text x="11.6" y="18.6" font-family="Liberation Sans,sans-serif" font-weight="bold" font-size="13" fill="#fff" stroke="#fff" stroke-width=".5">Y</text></svg>
<svg style="left:409.3px;top:129.3px;" width="10" height="6" viewBox="0 0 10 6"><path d="M0 0H10L5.0 6Z" fill="#e0e6ee"/></svg>
<div style="left:427.7px;top:120px;width:26.9px;height:23.8px;background:#4a4a4a;border-radius:3px 0 0 3px"></div>
<div style="left:455.6px;top:120px;width:17.4px;height:23.8px;background:#525252;border-radius:0 3px 3px 0"></div>
<svg style="left:431px;top:121px;" width="24" height="22" viewBox="0 0 24 22"><path d="M5 2V18M10 2V11M15 2V9M2 5.5H18M2 10.5H11M2 15.5H8" stroke="#8e8e8e" stroke-width="1.1"/><path d="M11.5 13.2A3.8 3.8 0 1 1 12 18.5" fill="none" stroke="#b4553a" stroke-width="2.6"/><path d="M9.5 12H12.6V14.6H9.5ZM9.5 17.2H12.6V19.8H9.5Z" fill="#c8c8c8"/></svg>
<svg style="left:459.3px;top:129.3px;" width="10" height="6" viewBox="0 0 10 6"><path d="M0 0H10L5.0 6Z" fill="#9a9a9a"/></svg>
<div style="left:477px;top:120px;width:48.7px;height:23.8px;background:#585858;border-radius:3px"></div>
<svg style="left:480px;top:122px;" width="24" height="21" viewBox="0 0 24 21"><path d="M3 3V18M6 7V13M9 5V16M12 7V13M15 3V18M18 7V13M21 5V16" stroke="#d0d0d0" stroke-width="1.2"/><path d="M3 10.2H21" stroke="#d0d0d0" stroke-width="1.2"/></svg>
<svg style="left:507.5px;top:128.5px;" width="10" height="6" viewBox="0 0 10 6"><path d="M0 0H10L5.0 6Z" fill="#c4c4c4"/></svg>
<div style="left:728px;top:120px;width:48px;height:23.8px;background:#585858;border-radius:3px"></div>
<svg style="left:732px;top:122px;" width="20" height="20" viewBox="0 0 20 20"><circle cx="10" cy="9.8" r="7.3" fill="none" stroke="#c8c8c8" stroke-width="1.8"/><path d="M4.5 14.5A7.5 7.5 0 0 0 16.8 13.2A9 9 0 0 1 4.5 14.5Z" fill="#e0e0e0"/><path d="M15.8 4.8A8 8 0 0 1 16.9 13" stroke="#e8e8e8" stroke-width="2.6" fill="none"/></svg>
<svg style="left:758.5px;top:128.3px;" width="10" height="6" viewBox="0 0 10 6"><path d="M0 0H10L5.0 6Z" fill="#c4c4c4"/></svg>
<div style="left:780.2px;top:120px;width:39.4px;height:23.8px;background:#46607c;border-radius:3px"></div>
<span class="t b" style="left:792px;top:122.5px;font-size:14px;color:#fff;letter-spacing:0">2D</span>
<div style="left:824px;top:120px;width:40.2px;height:23.8px;background:#46607c;border-radius:3px"></div>
<svg style="left:836px;top:123px;" width="16" height="18" viewBox="0 0 16 18"><path d="M8 1A5.4 5.4 0 0 1 11 10.8V12.6H5V10.8A5.4 5.4 0 0 1 8 1Z" fill="#fff"/><path d="M5.4 13.4H10.6V15.6Q8 17.6 5.4 15.6Z" fill="#fff"/></svg>
<div style="left:868.2px;top:120px;width:39.4px;height:23.8px;background:#4a4a4a;border-radius:3px"></div>
<svg style="left:880px;top:124px;" width="18" height="16" viewBox="0 0 18 16"><path d="M1.5 4.5H3.8V10.5H1.5ZM5 4.8L8.6 1.5V13.5L5 10.2Z" fill="#8a8a8a"/><path d="M10 9L15 14M15 9L10 14" stroke="#8a8a8a" stroke-width="1.6"/></svg>
<div style="left:912px;top:120px;width:27.7px;height:23.8px;background:#585858;border-radius:3px 0 0 3px"></div>
<div style="left:940.8px;top:120px;width:17.2px;height:23.8px;background:#585858;border-radius:0 3px 3px 0"></div>
<svg style="left:917px;top:123px;" width="18" height="18" viewBox="0 0 18 18"><path d="M1 8.6L8.4 5L15.8 8.6L8.4 12.2Z" fill="#d0d0d0"/><path d="M1 11.8L3.4 10.6L8.4 13L13.4 10.6L15.8 11.8L8.4 15.6Z" fill="#d0d0d0"/><path d="M12.6 0.5L13.7 3.3L16.5 4.4L13.7 5.5L12.6 8.3L11.5 5.5L8.7 4.4L11.5 3.3Z" fill="#e8e8e8" stroke="#585858" stroke-width=".8"/></svg>
<svg style="left:944.5px;top:129.2px;" width="10" height="6" viewBox="0 0 10 6"><path d="M0 0H10L5.0 6Z" fill="#c4c4c4"/></svg>
<div style="left:962.2px;top:120px;width:39.5px;height:23.8px;background:#46607c;border-radius:3px"></div>
<svg style="left:971px;top:123px;" width="22" height="18" viewBox="0 0 22 18"><path d="M1.5 9.5Q10.5 -0.5 19.5 8.2Q11 17.5 1.5 9.5Z" fill="none" stroke="#fff" stroke-width="1.7"/><circle cx="10.5" cy="8.8" r="2.6" fill="none" stroke="#fff" stroke-width="1.5"/><path d="M3.2 15.8L16.7 0.8" stroke="#46607c" stroke-width="2.4"/><path d="M4 16.5L17.5 1.5" stroke="#fff" stroke-width="1.7"/></svg>
<div style="left:1006px;top:120px;width:48.5px;height:23.8px;background:#585858;border-radius:3px"></div>
<svg style="left:1012px;top:125px;" width="17" height="14" viewBox="0 0 17 14"><path d="M0.3 1.5H5.3V12.2H0.3ZM6.6 1.5H11V12.2H6.6ZM11.8 5.3L15.8 2.2V11.5L11.8 8.4Z" fill="#bcbcbc"/></svg>
<svg style="left:1037.0px;top:128.3px;" width="10" height="6" viewBox="0 0 10 6"><path d="M0 0H10L5.0 6Z" fill="#c4c4c4"/></svg>
<div style="left:1058.7px;top:120px;width:26.9px;height:23.8px;background:#46607c;border-radius:3px 0 0 3px"></div>
<div style="left:1086.6px;top:120px;width:18.2px;height:23.8px;background:#46607c;border-radius:0 3px 3px 0"></div>
<svg style="left:1061px;top:121px;" width="22" height="22" viewBox="0 0 22 22"><circle cx="11" cy="11" r="7.8" fill="none" stroke="#fff" stroke-width="1.7"/><path d="M11 3.2Q15.8 11 11 18.8M3.4 9.6Q11 14.6 18.6 12" fill="none" stroke="#fff" stroke-width="1.3"/><circle cx="11" cy="3.2" r="1.8" fill="#fff"/><circle cx="3.4" cy="9.6" r="1.8" fill="#fff"/><circle cx="13.2" cy="12.8" r="1.8" fill="#fff"/></svg>
<svg style="left:1090.7px;top:129.2px;" width="10" height="6" viewBox="0 0 10 6"><path d="M0 0H10L5.0 6Z" fill="#e0e6ee"/></svg>
<svg style="left:232px;top:147px;" width="876.7" height="668" viewBox="0 0 876.7 668"><rect x="0" y="0" width="876.7" height="668" fill="#8a8a8a"/><defs><filter id="ds" x="-10%" y="-10%" width="120%" height="125%"><feDropShadow dx="-3" dy="7" stdDeviation="4.5" flood-color="#55607a" flood-opacity=".6"/></filter></defs><rect x="227.0" y="155.0" width="378.0" height="377.7" fill="#000" filter="url(#ds)"/><path d="M416.3 0V668M0 343.2H876.7" stroke="#e4f6dc" stroke-opacity=".75" stroke-width="1.2" fill="none"/><rect x="240.0" y="168.0" width="352.3" height="351.3" fill="#efefef" /><rect x="266.0" y="193.0" width="300.0" height="300.0" fill="#d9d3cb" /><rect x="267.0" y="194.0" width="298.0" height="298.0" fill="#e6dfd6" /><rect x="282.7" y="194.0" width="15.7" height="298.0" fill="#f4c44e" /><rect x="439.5" y="194.0" width="15.7" height="298.0" fill="#f4c44e" /><rect x="267.0" y="209.7" width="298.0" height="15.7" fill="#f4c44e" /><rect x="267.0" y="209.7" width="15.7" height="15.7" fill="#e6dfd6" /><rect x="267.0" y="303.8" width="298.0" height="15.7" fill="#f4c44e" /><rect x="267.0" y="335.2" width="188.2" height="15.7" fill="#f4c44e" /><rect x="439.5" y="209.7" width="15.7" height="15.7" fill="#f2f0ec" /><rect x="282.7" y="303.8" width="15.7" height="15.7" fill="#f2f0ec" /><rect x="439.5" y="303.8" width="15.7" height="15.7" fill="#f2f0ec" /><rect x="282.7" y="335.2" width="15.7" height="15.7" fill="#de3f3f" /><rect x="284.2" y="211.2" width="12.7" height="12.7" fill="none" stroke="#2f5fa8" stroke-width="3"/><rect x="502.3" y="194.0" width="62.7" height="15.7" fill="#de3f3f" /><rect x="517.9" y="225.4" width="47.1" height="78.4" fill="#de3f3f" /><rect x="533.6" y="241.1" width="15.7" height="31.4" fill="#2c64b8" /><rect x="345.4" y="225.4" width="31.4" height="62.7" fill="#2c64b8" /><rect x="376.8" y="225.4" width="47.1" height="62.7" fill="#de3f3f" /><rect x="392.5" y="241.1" width="15.7" height="15.7" fill="#f2f0ec" /><rect x="455.2" y="397.9" width="62.7" height="62.7" fill="#2c64b8" /><rect x="470.9" y="413.6" width="31.4" height="15.7" fill="#f4c44e" /><rect x="287.2" y="176.9" width="7.6" height="7.6" fill="#2c64b8" /><rect x="443.8" y="176.9" width="7.6" height="7.6" fill="#2c64b8" /><rect x="575.0" y="213.8" width="7.6" height="7.6" fill="#2c64b8" /><rect x="575.0" y="307.9" width="7.6" height="7.6" fill="#2c64b8" /><rect x="249.9" y="307.9" width="7.6" height="7.6" fill="#2c64b8" /><rect x="249.9" y="339.2" width="7.6" height="7.6" fill="#2c64b8" /><rect x="287.2" y="502.1" width="7.6" height="7.6" fill="#2c64b8" /><rect x="443.8" y="502.1" width="7.6" height="7.6" fill="#2c64b8" /><rect x="639.0" y="320.0" width="9.0" height="46.5" fill="#2c64b8" /><path d="M651.2 425.0C651.4 421.9 650.7 421.3 651.6 420.2C652.5 419.1 654.9 418.4 656.5 418.4C658.1 418.4 660.5 419.1 661.4 420.2C662.3 421.3 661.9 422.5 661.9 425.0C661.9 427.5 661.4 432.1 661.3 435.0C661.1 437.9 660.6 441.3 661.0 442.6C661.4 443.9 662.6 443.0 663.5 443.0C664.4 443.0 665.5 442.4 666.5 442.7C667.5 443.0 668.8 444.4 669.6 445.0C670.5 445.6 670.6 446.2 671.6 446.4C672.6 446.5 674.3 445.6 675.5 445.9C676.7 446.2 678.0 447.2 678.8 448.2C679.6 449.2 679.6 451.0 680.4 451.6C681.2 452.2 682.6 451.5 683.5 452.0C684.4 452.5 685.4 453.5 685.9 454.5C686.4 455.5 686.3 456.4 686.4 458.0C686.5 459.6 686.6 461.8 686.3 464.0C686.0 466.2 685.5 468.9 684.8 471.0C684.1 473.1 683.2 474.6 682.2 476.7C681.2 478.8 680.2 481.4 679.0 483.5C677.8 485.6 676.2 487.6 675.0 489.4C673.8 491.1 672.4 492.6 671.6 494.0C670.8 495.4 670.5 495.7 670.0 498.0C669.5 500.3 669.4 503.8 668.9 508.0C668.4 512.2 667.8 518.0 667.3 523.0C666.8 528.0 666.5 531.2 665.7 537.9C664.9 544.6 663.9 554.5 662.5 563.0C661.1 571.5 659.3 580.7 657.5 589.0C655.7 597.3 653.8 605.2 651.5 613.0C649.2 620.8 645.9 628.9 643.6 635.6C641.3 642.3 639.7 647.4 637.5 653.0C635.3 658.6 632.7 663.8 630.3 669.5C627.9 675.2 629.4 684.1 623.0 687.0C616.6 689.9 595.3 689.9 592.0 687.0C588.7 684.1 599.9 675.0 603.2 669.5C606.5 664.0 609.1 659.6 612.0 654.0C614.9 648.4 617.3 642.4 620.3 635.6C623.3 628.8 627.1 620.8 630.0 613.0C632.9 605.2 635.5 597.3 637.8 589.0C640.1 580.7 642.3 571.5 644.0 563.0C645.7 554.5 646.9 544.6 648.0 537.9C649.1 531.2 649.8 528.0 650.5 523.0C651.2 518.0 651.7 511.7 652.0 508.0C652.3 504.3 652.4 503.2 652.3 501.0C652.2 498.8 652.4 497.0 651.6 494.8C650.8 492.6 648.8 490.3 647.5 488.0C646.2 485.7 644.6 483.0 643.6 481.0C642.6 479.0 642.1 477.5 641.7 475.8C641.3 474.0 641.3 472.1 641.3 470.5C641.3 468.9 641.4 467.6 641.8 465.9C642.2 464.2 643.0 462.5 643.8 460.5C644.6 458.5 645.9 456.0 646.8 454.0C647.7 452.0 648.6 451.2 649.2 448.7C649.8 446.2 650.1 443.0 650.4 439.0C650.7 435.0 651.0 428.1 651.2 425.0Z" fill="#2c64b8"/><circle cx="416.3" cy="343.2" r="5.3" fill="#8e0e0e"/><path d="M411.0 343.2h10.6M416.3 337.9v10.6" stroke="#2a0000" stroke-width="1.2"/><path d="M58.7 0V668 M118.3 0V668 M177.9 0V668 M237.5 0V668 M297.1 0V668 M356.7 0V668 M416.3 0V668 M475.9 0V668 M535.5 0V668 M595.1 0V668 M654.7 0V668 M714.3 0V668 M773.9 0V668 M833.5 0V668 M0 45.2H876.7 M0 104.8H876.7 M0 164.4H876.7 M0 224.0H876.7 M0 283.6H876.7 M0 343.2H876.7 M0 402.8H876.7 M0 462.4H876.7 M0 522.0H876.7 M0 581.6H876.7 M0 641.2H876.7" stroke="#d8f0cc" stroke-opacity=".24" stroke-width="1.5" fill="none"/><rect x="71.6" y="149.6" width="690" height="387.6" fill="none" stroke="#fff" stroke-width="1.3"/><path d="M101.5 182.5l5.2 4.6 5.2-4.6" stroke="#262626" stroke-width="2.3" fill="none"/></svg>
<div style="left:406px;top:443px;width:40px;height:40.5px;background:#f6f6f6;box-shadow:1px 2px 3px rgba(0,0,0,.45)"></div>
<div style="left:406px;top:494.5px;width:40px;height:40.5px;background:#f6f6f6;box-shadow:1px 2px 3px rgba(0,0,0,.45)"></div>
<svg style="left:405px;top:443px;" width="41" height="41" viewBox="0 0 41 41"><path d="M12.5 11.5H30.5V30.5H12.5V15" fill="none" stroke="#2a5aa5" stroke-width="3.6"/><path d="M5.5 11.5L13 5.5V17.5Z" fill="#2a5aa5"/></svg>
<svg style="left:405px;top:494.5px;" width="41" height="41" viewBox="0 0 41 41"><path d="M17.5 8L28 18.5L17.5 29L7 18.5Z" fill="none" stroke="#2a5aa5" stroke-width="3.6"/><path d="M23 24L35.5 34.5" stroke="#2a5aa5" stroke-width="3.6"/></svg>
<div style="left:235.3px;top:151px;width:53.6px;height:178.3px;background:#1f1f1f;border-radius:5px;box-shadow:0 1px 3px rgba(0,0,0,.4)"></div>
<div style="left:252.5px;top:159.2px;width:20px;height:1px;background:#6a6a6a"></div>
<div style="left:252.5px;top:162.6px;width:20px;height:1px;background:#6a6a6a"></div>
<div style="left:239px;top:171.2px;width:46.2px;height:24.9px;background:#585858;border-radius:4px 4px 0 0"></div>
<div style="left:239px;top:196.8px;width:46.2px;height:24.9px;background:#585858;border-radius:0"></div>
<div style="left:239px;top:222.7px;width:46.2px;height:24.9px;background:#585858;border-radius:0"></div>
<div style="left:239px;top:248.8px;width:46.2px;height:24.9px;background:#585858;border-radius:0"></div>
<div style="left:239px;top:274.6px;width:46.2px;height:24.9px;background:#46607c;border-radius:0"></div>
<div style="left:239px;top:300.6px;width:46.2px;height:24.9px;background:#585858;border-radius:0 0 4px 4px"></div>
<svg style="left:252px;top:173px;" width="20" height="21" viewBox="0 0 20 21"><path d="M5.3 20Q3.2 16 1.4 11.8Q0.6 9.8 2 9.4Q3.2 9.2 4.2 11.4L5 12.6L4.2 4.4Q4.1 3 5.2 2.9Q6.2 2.9 6.5 4.3L7.5 10L7.7 2.2Q7.8 0.8 8.9 0.8Q10 0.8 10.1 2.2L10.5 10L11.6 3.2Q11.9 1.9 12.9 2.1Q13.9 2.3 13.8 3.7L13.2 10.8L15.2 6.4Q15.8 5.2 16.7 5.6Q17.5 6.1 17.1 7.4Q15.8 12 15.2 15.4Q14.7 18 13.8 20Z" fill="#d6d6d6"/></svg>
<svg style="left:252px;top:200px;" width="20" height="20" viewBox="0 0 20 20"><path d="M10 4.5V8M10 12V15.5M4.5 10H8M12 10H15.5" stroke="#d6d6d6" stroke-width="1.3"/><path d="M10 0.8L12.9 5H7.1ZM10 19.2L12.9 15H7.1ZM0.8 10L5 7.1V12.9ZM19.2 10L15 7.1V12.9Z" fill="#d6d6d6"/></svg>
<svg style="left:252px;top:225px;" width="20" height="21" viewBox="0 0 20 21"><path d="M6.99 2.53A8.8 8.8 0 0 0 6.99 19.07M13.01 19.07A8.8 8.8 0 0 0 13.01 2.53" fill="none" stroke="#d6d6d6" stroke-width="1.35"/><path d="M2 18.9H7V13.9M18.4 2.7H13V7.7" fill="none" stroke="#d6d6d6" stroke-width="1.35"/></svg>
<svg style="left:252px;top:252px;" width="20" height="20" viewBox="0 0 20 20"><rect x="1.3" y="1.3" width="17.4" height="17.4" rx="2" fill="none" stroke="#d6d6d6" stroke-width="1.2"/><rect x="1.3" y="13.9" width="4.8" height="4.8" fill="none" stroke="#d6d6d6" stroke-width="1.2"/><path d="M8.3 11.7L13.6 6.4" fill="none" stroke="#d6d6d6" stroke-width="1.4"/><path d="M10.2 4.6H15.4V9.8Z" fill="#d6d6d6"/></svg>
<svg style="left:252px;top:278px;" width="20" height="20" viewBox="0 0 20 20"><path d="M6.4 3.1H13.6M6.4 16.9H13.6M3.1 6.4V13.6M16.9 6.4V13.6" stroke="#fff" stroke-width="1.4"/><path d="M1.1 1.1H5.1V5.1H1.1ZM14.9 1.1H18.9V5.1H14.9ZM1.1 14.9H5.1V18.9H1.1ZM14.9 14.9H18.9V18.9H14.9Z" fill="#fff"/></svg>
<svg style="left:251px;top:302.5px;" width="22" height="22" viewBox="0 0 22 22"><circle cx="10.9" cy="11.2" r="8.3" fill="none" stroke="#d6d6d6" stroke-width="1.4" stroke-dasharray="10 3" stroke-dashoffset="5"/><path d="M10.9 8V14.4M7.7 11.2H14.1" stroke="#d6d6d6" stroke-width="1.2"/><path d="M10.9 4.6L13.2 7.9H8.6ZM10.9 17.8L13.2 14.5H8.6ZM4.3 11.2L7.6 8.9V13.5ZM17.5 11.2L14.2 8.9V13.5Z" fill="#d6d6d6"/><path d="M17.4 1.2L21 0.6L20.4 4.6ZM0.6 18L0.8 21.8L4.6 21.2Z" fill="#d6d6d6"/></svg>
<!-- gen_insp -->
<div style="left:1111px;top:92px;width:809px;height:1043px;background:#383838"></div>
<div class="tabbar" style="left:1111px;top:92px;width:809px;height:24px;"></div>
<div class="tab" style="left:1232px;top:92px;width:141.3px;height:24px;border-radius:3px 3px 0 0"></div>
<svg style="left:1123px;top:98.5px;" width="12" height="12" viewBox="0 0 12 12"><circle cx="6" cy="6" r="6" fill="#c4c4c4"/><path d="M6 5.2V9.4" stroke="#282828" stroke-width="1.7"/><circle cx="6" cy="3.1" r="1" fill="#282828"/></svg>
<span class="t " style="left:1141px;top:94.5px;letter-spacing:0.66px;">Inspector</span>
<span class="t " style="left:1239px;top:94.5px;letter-spacing:0.44px;">GameDataEditor</span>
<span class="t " style="left:1384px;top:94.5px;letter-spacing:0.38px;">Global Editor Window</span>
<svg style="left:1900px;top:97px;" width="4" height="12" viewBox="0 0 4 12"><circle cx="2" cy="1.8" r="1.35" fill="#c4c4c4"/><circle cx="2" cy="6" r="1.35" fill="#c4c4c4"/><circle cx="2" cy="10.2" r="1.35" fill="#c4c4c4"/></svg>
<span class="t clip " style="left:1135.3px;top:123.19999999999999px;width:167.5px;letter-spacing:0.32px;color:#cdcdcd">On Reload Level Request</span>
<div style="left:1304.7px;top:121.2px;width:512.6px;height:22.6px;background:#2a2a2a;border:1px solid #222;border-radius:3.5px"></div>
<div style="left:1794px;top:122.6px;width:22px;height:20px;background:#373737;border-radius:0 2px 2px 0"></div>
<svg style="left:1307.5px;top:125px;" width="15" height="15" viewBox="0 0 15 15"><circle cx="7.5" cy="7.5" r="6.3" fill="#4a0f18"/><circle cx="7.5" cy="7.5" r="6.9" fill="none" stroke="#c04450" stroke-width="1.1" stroke-dasharray="8 2.8" stroke-dashoffset="2"/><text x="7.5" y="10.9" text-anchor="middle" font-family="Liberation Sans,sans-serif" font-weight="bold" font-size="9.5" fill="#fff">E</text></svg>
<span class="t " style="left:1324.3px;top:123.60000000000002px;letter-spacing:0.43px;color:#cdcdcd">OnLoadLevelRequested (Int Event)</span>
<svg style="left:1797.5px;top:125.5px;" width="14" height="14" viewBox="0 0 14 14"><circle cx="7" cy="7" r="5.6" fill="none" stroke="#c4c4c4" stroke-width="1.3"/><circle cx="7" cy="7" r="2" fill="#c4c4c4"/></svg>
<span class="t clip " style="left:1116px;top:150.8px;width:187px;letter-spacing:0.29px;color:#cdcdcd">Overwrite Game Seed (Editor)</span>
<div style="left:1306px;top:151.5px;width:16.5px;height:17px;background:#2a2a2a;border:1px solid #1f1f1f;border-radius:3px"></div>
<span class="t " style="left:1116px;top:175.8px;letter-spacing:0.31px;color:#7e7e7e">Game Seed</span>
<div style="left:1304.7px;top:173.6px;width:594.6px;height:22.6px;background:#2e2e2e;border:1px solid #2b2b2b;border-radius:3.5px"></div><span class="t" style="left:1308.6px;top:175.8px;color:#7e7e7e;letter-spacing:.8px">814496027</span>
<span class="t " style="left:1116px;top:200.8px;letter-spacing:0.60px;color:#7e7e7e">Level Seed</span>
<div style="left:1304.7px;top:198.6px;width:594.6px;height:22.6px;background:#2e2e2e;border:1px solid #2b2b2b;border-radius:3.5px"></div><span class="t" style="left:1308.6px;top:200.8px;color:#7e7e7e;letter-spacing:.8px">814496042</span>
<span class="t " style="left:1116px;top:225.8px;letter-spacing:0.43px;color:#7e7e7e">Debug Crossing Seed</span>
<div style="left:1304.7px;top:223.6px;width:594.6px;height:22.6px;background:#2e2e2e;border:1px solid #2b2b2b;border-radius:3.5px"></div><span class="t" style="left:1308.6px;top:225.8px;color:#7e7e7e;letter-spacing:.8px">0</span>
<div class="nb" style="left:1116px;top:252.5px;width:57.3px;height:22.7px;line-height:23.3px">1</div>
<div class="nb" style="left:1178.2px;top:252.5px;width:57.8px;height:22.7px;line-height:23.3px">2</div>
<div class="nb" style="left:1242px;top:252.5px;width:58.0px;height:22.7px;line-height:23.3px">3</div>
<div class="nb" style="left:1306.8px;top:252.5px;width:58.2px;height:22.7px;line-height:23.3px">4</div>
<div class="nb" style="left:1371px;top:252.5px;width:58.1px;height:22.7px;line-height:23.3px">5</div>
<div class="nb" style="left:1434.1px;top:252.5px;width:58.2px;height:22.7px;line-height:23.3px">6</div>
<div class="nb" style="left:1498.1px;top:252.5px;width:58.1px;height:22.7px;line-height:23.3px">7</div>
<div class="nb" style="left:1562.2px;top:252.5px;width:58.1px;height:22.7px;line-height:23.3px">8</div>
<div class="nb" style="left:1626.2px;top:252.5px;width:58.1px;height:22.7px;line-height:23.3px">9</div>
<div class="nb" style="left:1690.7px;top:252.5px;width:67.3px;height:22.7px;line-height:23.3px">10</div>
<div class="nb" style="left:1762.9px;top:252.5px;width:64.5px;height:22.7px;line-height:23.3px">11</div>
<div class="nb" style="left:1832.7px;top:252.5px;width:65.6px;height:22.7px;line-height:23.3px">12</div>
<div class="nb" style="left:1116px;top:280px;width:59.8px;height:23.0px;line-height:23.6px">13</div>
<div class="nb" style="left:1181.5px;top:280px;width:60.5px;height:23.0px;line-height:23.6px">14</div>
<div class="nb" style="left:1247.7px;top:280px;width:59.2px;height:23.0px;line-height:23.6px">15</div>
<div class="nb" style="left:1312.9px;top:280px;width:58.7px;height:23.0px;line-height:23.6px">16</div>
<div class="nb" style="left:1377px;top:280px;width:58.6px;height:23.0px;line-height:23.6px">17</div>
<div class="nb" style="left:1442px;top:280px;width:59.1px;height:23.0px;line-height:23.6px">18</div>
<div class="nb" style="left:1507.1px;top:280px;width:59.1px;height:23.0px;line-height:23.6px">19</div>
<div class="nb" style="left:1572.2px;top:280px;width:61.9px;height:23.0px;line-height:23.6px">20</div>
<div class="nb" style="left:1638.8px;top:280px;width:59.4px;height:23.0px;line-height:23.6px">21</div>
<div class="nb" style="left:1704px;top:280px;width:60.0px;height:23.0px;line-height:23.6px">22</div>
<div class="nb" style="left:1769.1px;top:280px;width:61.9px;height:23.0px;line-height:23.6px">23</div>
<div class="nb" style="left:1837px;top:280px;width:61.3px;height:23.0px;line-height:23.6px">24</div>
<div class="nb" style="left:1116px;top:307.3px;width:59.1px;height:23.0px;line-height:23.6px">25</div>
<div class="nb" style="left:1180.9px;top:307.3px;width:59.4px;height:23.0px;line-height:23.6px">26</div>
<div class="nb" style="left:1246.2px;top:307.3px;width:59.2px;height:23.0px;line-height:23.6px">27</div>
<div class="nb" style="left:1311.2px;top:307.3px;width:58.8px;height:23.0px;line-height:23.6px">28</div>
<div class="nb" style="left:1376.3px;top:307.3px;width:58.7px;height:23.0px;line-height:23.6px">29</div>
<div class="nb" style="left:1442px;top:307.3px;width:59.7px;height:23.0px;line-height:23.6px">30</div>
<div class="nb" style="left:1508.2px;top:307.3px;width:58.7px;height:23.0px;line-height:23.6px">31</div>
<div class="nb" style="left:1572.9px;top:307.3px;width:60.6px;height:23.0px;line-height:23.6px">32</div>
<div class="nb" style="left:1638.8px;top:307.3px;width:60.0px;height:23.0px;line-height:23.6px">33</div>
<div class="nb" style="left:1705.7px;top:307.3px;width:60.2px;height:23.0px;line-height:23.6px">34</div>
<div class="nb" style="left:1771.9px;top:307.3px;width:59.8px;height:23.0px;line-height:23.6px">35</div>
<div class="nb" style="left:1837.6px;top:307.3px;width:60.7px;height:23.0px;line-height:23.6px">36</div>
<div class="nb" style="left:1116px;top:334.8px;width:59.8px;height:23.0px;line-height:23.6px">37</div>
<div class="nb" style="left:1182.2px;top:334.8px;width:59.8px;height:23.0px;line-height:23.6px">38</div>
<div class="nb" style="left:1247px;top:334.8px;width:59.5px;height:23.0px;line-height:23.6px">39</div>
<div class="nb" style="left:1312.9px;top:334.8px;width:59.7px;height:23.0px;line-height:23.6px">40</div>
<div class="nb" style="left:1378.6px;top:334.8px;width:59.2px;height:23.0px;line-height:23.6px">41</div>
<div class="nb" style="left:1443px;top:334.8px;width:59.8px;height:23.0px;line-height:23.6px">42</div>
<div class="nb" style="left:1508.8px;top:334.8px;width:60.2px;height:23.0px;line-height:23.6px">43</div>
<div class="nb" style="left:1575.8px;top:334.8px;width:60.5px;height:23.0px;line-height:23.6px">44</div>
<div class="nb" style="left:1641.2px;top:334.8px;width:59.8px;height:23.0px;line-height:23.6px">45</div>
<div class="nb" style="left:1706.7px;top:334.8px;width:60.3px;height:23.0px;line-height:23.6px">46</div>
<div class="nb" style="left:1772.5px;top:334.8px;width:60.2px;height:23.0px;line-height:23.6px">47</div>
<div class="nb" style="left:1838.5px;top:334.8px;width:59.8px;height:23.0px;line-height:23.6px">48</div>
<div class="nb" style="left:1116px;top:362.2px;width:59.8px;height:23.1px;line-height:23.7px">49</div>
<div class="nb" style="left:1182.2px;top:362.2px;width:59.8px;height:23.1px;line-height:23.7px">50</div>
<div class="nb" style="left:1249.2px;top:362.2px;width:57.8px;height:23.1px;line-height:23.7px">51</div>
<div class="nb" style="left:1312.9px;top:362.2px;width:59.3px;height:23.1px;line-height:23.7px">52</div>
<div class="nb" style="left:1378px;top:362.2px;width:59.8px;height:23.1px;line-height:23.7px">53</div>
<div class="nb" style="left:1443.5px;top:362.2px;width:60.4px;height:23.1px;line-height:23.7px">54</div>
<div class="nb" style="left:1511.8px;top:362.2px;width:59.3px;height:23.1px;line-height:23.7px">55</div>
<div class="nb" style="left:1576.9px;top:362.2px;width:59.4px;height:23.1px;line-height:23.7px">56</div>
<div class="nb" style="left:1642px;top:362.2px;width:59.0px;height:23.1px;line-height:23.7px">57</div>
<div class="nb" style="left:1706.7px;top:362.2px;width:59.2px;height:23.1px;line-height:23.7px">58</div>
<div class="nb" style="left:1772.5px;top:362.2px;width:59.8px;height:23.1px;line-height:23.7px">59</div>
<div class="nb" style="left:1838px;top:362.2px;width:60.3px;height:23.1px;line-height:23.7px">60</div>
<span class="t " style="left:1116.5px;top:390.8px;letter-spacing:0.70px;color:#cdcdcd">Text:</span>
<span class="t " style="left:1306.2px;top:390.8px;letter-spacing:0.53px;color:#cdcdcd">Big plazas and buildings started to appear</span>
<svg style="left:1117.3999999999999px;top:421.0px;" width="10.8" height="9.6" viewBox="0 0 10.8 9.6"><path d="M0 0H10.8L5.4 9.6Z" fill="#7a7a7a"/></svg>
<span class="t " style="left:1132px;top:415.8px;letter-spacing:0.74px;color:#cdcdcd">Level16</span>
<span class="t " style="left:1135.3px;top:440.8px;letter-spacing:0.49px;color:#cdcdcd">Seed Overwrite</span>
<div style="left:1304.7px;top:438.6px;width:594.6px;height:22.6px;background:#2a2a2a;border:1px solid #222;border-radius:3.5px"></div><span class="t" style="left:1308.6px;top:440.8px;color:#d2d2d2;letter-spacing:.8px">-1</span>
<span class="t " style="left:1135.3px;top:465.8px;letter-spacing:0.44px;color:#cdcdcd">Crossing Seed Offset</span>
<div style="left:1304.7px;top:463.6px;width:594.6px;height:22.6px;background:#2a2a2a;border:1px solid #222;border-radius:3.5px"></div><span class="t" style="left:1308.6px;top:465.8px;color:#d2d2d2;letter-spacing:.8px">0</span>
<svg style="left:1137.3px;top:495.0px;" width="9.4" height="10.6" viewBox="0 0 9.4 10.6"><path d="M0 0V10.6L9.4 5.3Z" fill="#7a7a7a"/></svg>
<span class="t b " style="left:1153px;top:490.8px;letter-spacing:0.24px;color:#dcdcdc">Pre Level Commands</span>
<div style="left:1840.5px;top:488.6px;width:58.8px;height:22.6px;background:#2a2a2a;border:1px solid #222;border-radius:3.5px"></div><span class="t" style="left:1844.3999999999999px;top:490.8px;color:#d2d2d2;letter-spacing:.8px">0</span>
<svg style="left:1137.3px;top:520.0px;" width="9.4" height="10.6" viewBox="0 0 9.4 10.6"><path d="M0 0V10.6L9.4 5.3Z" fill="#7a7a7a"/></svg>
<span class="t b " style="left:1153px;top:515.8px;letter-spacing:0.28px;color:#dcdcdc">Post Level Commands</span>
<div style="left:1840.5px;top:513.6px;width:58.8px;height:22.6px;background:#2a2a2a;border:1px solid #222;border-radius:3.5px"></div><span class="t" style="left:1844.3999999999999px;top:515.8px;color:#d2d2d2;letter-spacing:.8px">1</span>
<svg style="left:1137.3px;top:545.0px;" width="9.4" height="10.6" viewBox="0 0 9.4 10.6"><path d="M0 0V10.6L9.4 5.3Z" fill="#7a7a7a"/></svg>
<span class="t b " style="left:1153px;top:540.8px;letter-spacing:0.37px;color:#dcdcdc">Custom Data</span>
<div style="left:1840.5px;top:538.6px;width:58.8px;height:22.6px;background:#2a2a2a;border:1px solid #222;border-radius:3.5px"></div><span class="t" style="left:1844.3999999999999px;top:540.8px;color:#d2d2d2;letter-spacing:.8px">0</span>
<span class="t " style="left:1135.3px;top:565.8px;letter-spacing:0.17px;color:#cdcdcd">Nr Of Cells</span>
<span class="t " style="left:1153.5px;top:590.8px;letter-spacing:-0.52px;color:#cdcdcd">X</span>
<div style="left:1170.9px;top:588.6px;width:352.1px;height:22.6px;background:#2a2a2a;border:1px solid #222;border-radius:3.5px"></div><span class="t" style="left:1174.8px;top:590.8px;color:#d2d2d2;letter-spacing:.8px">19</span>
<span class="t " style="left:1531px;top:590.8px;letter-spacing:-0.52px;color:#cdcdcd">Y</span>
<div style="left:1547.7px;top:588.6px;width:351.6px;height:22.6px;background:#2a2a2a;border:1px solid #222;border-radius:3.5px"></div><span class="t" style="left:1551.6px;top:590.8px;color:#d2d2d2;letter-spacing:.8px">19</span>
<span class="t " style="left:1135.3px;top:615.8px;letter-spacing:0.42px;color:#cdcdcd">World Size</span>
<span class="t " style="left:1153.5px;top:640.8px;letter-spacing:-0.52px;color:#cdcdcd">X</span>
<div style="left:1170.9px;top:638.6px;width:352.1px;height:22.6px;background:#2a2a2a;border:1px solid #222;border-radius:3.5px"></div><span class="t" style="left:1174.8px;top:640.8px;color:#d2d2d2;letter-spacing:.8px">5</span>
<span class="t " style="left:1531px;top:640.8px;letter-spacing:-0.52px;color:#cdcdcd">Y</span>
<div style="left:1547.7px;top:638.6px;width:351.6px;height:22.6px;background:#2a2a2a;border:1px solid #222;border-radius:3.5px"></div><span class="t" style="left:1551.6px;top:640.8px;color:#d2d2d2;letter-spacing:.8px">5</span>
<span class="t " style="left:1135.3px;top:665.8px;letter-spacing:0.44px;color:#cdcdcd">Ver Full Lane Count</span>
<div style="left:1304.7px;top:663.6px;width:594.6px;height:22.6px;background:#2a2a2a;border:1px solid #222;border-radius:3.5px"></div><span class="t" style="left:1308.6px;top:665.8px;color:#d2d2d2;letter-spacing:.8px">2</span>
<span class="t " style="left:1135.3px;top:690.8px;letter-spacing:0.45px;color:#cdcdcd">Ver Partial Lane Count</span>
<div style="left:1304.7px;top:688.6px;width:594.6px;height:22.6px;background:#2a2a2a;border:1px solid #222;border-radius:3.5px"></div><span class="t" style="left:1308.6px;top:690.8px;color:#d2d2d2;letter-spacing:.8px">0</span>
<span class="t " style="left:1135.3px;top:715.8px;letter-spacing:0.41px;color:#cdcdcd">Hor Full Lane Count</span>
<div style="left:1304.7px;top:713.6px;width:594.6px;height:22.6px;background:#2a2a2a;border:1px solid #222;border-radius:3.5px"></div><span class="t" style="left:1308.6px;top:715.8px;color:#d2d2d2;letter-spacing:.8px">1</span>
<span class="t " style="left:1135.3px;top:740.8px;letter-spacing:0.43px;color:#cdcdcd">Hor Partial Lane Count</span>
<div style="left:1304.7px;top:738.6px;width:594.6px;height:22.6px;background:#2a2a2a;border:1px solid #222;border-radius:3.5px"></div><span class="t" style="left:1308.6px;top:740.8px;color:#d2d2d2;letter-spacing:.8px">2</span>
<span class="t " style="left:1135.3px;top:765.8px;letter-spacing:0.39px;color:#cdcdcd">Nr Of Squares Min Max</span>
<span class="t " style="left:1153.5px;top:790.8px;letter-spacing:-0.52px;color:#cdcdcd">X</span>
<div style="left:1170.9px;top:788.6px;width:352.1px;height:22.6px;background:#2a2a2a;border:1px solid #222;border-radius:3.5px"></div><span class="t" style="left:1174.8px;top:790.8px;color:#d2d2d2;letter-spacing:.8px">5</span>
<span class="t " style="left:1531px;top:790.8px;letter-spacing:-0.52px;color:#cdcdcd">Y</span>
<div style="left:1547.7px;top:788.6px;width:351.6px;height:22.6px;background:#2a2a2a;border:1px solid #222;border-radius:3.5px"></div><span class="t" style="left:1551.6px;top:790.8px;color:#d2d2d2;letter-spacing:.8px">5</span>
<span class="t clip " style="left:1153px;top:815.8px;width:149.5px;letter-spacing:0.33px;color:#cdcdcd">Crossing Data Overwrite</span>
<div style="left:1303px;top:813.7px;width:514px;height:22.6px;background:#2a2a2a;border:1px solid #222;border-radius:3.5px"></div>
<div style="left:1794px;top:815px;width:22px;height:20px;background:#373737;border-radius:0 2px 2px 0"></div>
<svg style="left:1308.3px;top:818.5px;" width="10" height="13" viewBox="0 0 10 13"><path d="M0 0H6.4L10 3.6V13H0Z" fill="#e6e6e6"/><path d="M6.4 0V3.6H10" fill="#9a9a9a"/></svg>
<span class="t " style="left:1322.2px;top:816.3px;letter-spacing:0.38px;color:#cdcdcd">None (BW Crossings Level Data)</span>
<svg style="left:1797.5px;top:818px;" width="14" height="14" viewBox="0 0 14 14"><circle cx="7" cy="7" r="5.6" fill="none" stroke="#c4c4c4" stroke-width="1.3"/><circle cx="7" cy="7" r="2" fill="#c4c4c4"/></svg>
<div class="nb" style="left:1819px;top:814.5px;width:78.5px;height:21.5px;line-height:22.6px;letter-spacing:.5px">Create</div>
<span class="t " style="left:1135.3px;top:840.8px;letter-spacing:0.30px;color:#cdcdcd">Nr Of White Crossings</span>
<div style="left:1304.7px;top:838.6px;width:594.6px;height:22.6px;background:#2a2a2a;border:1px solid #222;border-radius:3.5px"></div><span class="t" style="left:1308.6px;top:840.8px;color:#d2d2d2;letter-spacing:.8px">3</span>
<span class="t " style="left:1135.3px;top:865.8px;letter-spacing:0.21px;color:#cdcdcd">Nr Of Red Crossings</span>
<div style="left:1304.7px;top:863.6px;width:594.6px;height:22.6px;background:#2a2a2a;border:1px solid #222;border-radius:3.5px"></div><span class="t" style="left:1308.6px;top:865.8px;color:#d2d2d2;letter-spacing:.8px">1</span>
<span class="t " style="left:1135.3px;top:890.8px;letter-spacing:0.38px;color:#cdcdcd">Nr Of Tunnels</span>
<div style="left:1304.7px;top:888.6px;width:594.6px;height:22.6px;background:#2a2a2a;border:1px solid #222;border-radius:3.5px"></div><span class="t" style="left:1308.6px;top:890.8px;color:#d2d2d2;letter-spacing:.8px">0</span>
<span class="t " style="left:1135.3px;top:915.8px;letter-spacing:0.10px;color:#cdcdcd">Nr Of Bumps</span>
<div style="left:1304.7px;top:913.6px;width:594.6px;height:22.6px;background:#2a2a2a;border:1px solid #222;border-radius:3.5px"></div><span class="t" style="left:1308.6px;top:915.8px;color:#d2d2d2;letter-spacing:.8px">0</span>
<span class="t " style="left:1135.3px;top:940.8px;letter-spacing:0.35px;color:#cdcdcd">Nr Of Victories</span>
<div style="left:1304.7px;top:938.6px;width:594.6px;height:22.6px;background:#2a2a2a;border:1px solid #222;border-radius:3.5px"></div><span class="t" style="left:1308.6px;top:940.8px;color:#d2d2d2;letter-spacing:.8px">0</span>
<svg style="left:1136.1px;top:971.0px;" width="10.8" height="9.6" viewBox="0 0 10.8 9.6"><path d="M0 0H10.8L5.4 9.6Z" fill="#7a7a7a"/></svg>
<span class="t b " style="left:1153px;top:965.8px;letter-spacing:0.26px;color:#dcdcdc">Entrance Indices To Skip</span>
<div style="left:1840.5px;top:963.6px;width:58.8px;height:22.6px;background:#2a2a2a;border:1px solid #222;border-radius:3.5px"></div><span class="t" style="left:1844.3999999999999px;top:965.8px;color:#d2d2d2;letter-spacing:.8px">0</span>
<div style="left:1133.2px;top:991px;width:765px;height:34px;background:#414141;border:1px solid #2a2a2a;border-radius:3px 3px 0 3px"></div>
<span class="t " style="left:1143px;top:998.3px;letter-spacing:0.41px;color:#cdcdcd">List is Empty</span>
<div style="left:1815.5px;top:1024px;width:71px;height:24px;background:#414141;border:1px solid #2a2a2a;border-top:none;border-radius:0 0 4px 4px"></div>
<svg style="left:1828.5px;top:1028.5px;" width="13" height="13" viewBox="0 0 13 13"><path d="M6.5 0.5V12.5M0.5 6.5H12.5" stroke="#d2d2d2" stroke-width="1.7"/></svg>
<div style="left:1860.5px;top:1034.3px;width:11px;height:1.6px;background:#7a7a7a"></div>
<span class="t " style="left:1135.3px;top:1054.3px;letter-spacing:0.43px;color:#cdcdcd">Nr Of Targets</span>
<div style="left:1304.7px;top:1052.1px;width:594.6px;height:22.6px;background:#2a2a2a;border:1px solid #222;border-radius:3.5px"></div><span class="t" style="left:1308.6px;top:1054.3px;color:#d2d2d2;letter-spacing:.8px">1</span>
<span class="t clip " style="left:1135.3px;top:1079.3px;width:167.3px;letter-spacing:0.23px;color:#cdcdcd">Max Nr Of Crossings Per Target</span>
<div style="left:1304.7px;top:1077.1px;width:594.6px;height:22.6px;background:#2a2a2a;border:1px solid #222;border-radius:3.5px"></div><span class="t" style="left:1308.6px;top:1079.3px;color:#d2d2d2;letter-spacing:.8px">4</span>
<span class="t " style="left:1135.3px;top:1104.3px;letter-spacing:0.63px;color:#cdcdcd">Snake Has Tail</span>
<div style="left:1305.5px;top:1105.5px;width:16.5px;height:17px;background:#2a2a2a;border:1px solid #1f1f1f;border-radius:3px"></div>
<svg style="left:1137.3px;top:1133.8px;" width="9.4" height="10.6" viewBox="0 0 9.4 10.6"><path d="M0 0V10.6L9.4 5.3Z" fill="#7a7a7a"/></svg>
<span class="t b " style="left:1153px;top:1129.6px;letter-spacing:-0.34px;color:#dcdcdc">Snake Tail</span>
<div style="left:1840.5px;top:1127.3999999999999px;width:58.8px;height:22.6px;background:#2a2a2a;border:1px solid #222;border-radius:3.5px"></div><span class="t" style="left:1844.3999999999999px;top:1129.6px;color:#d2d2d2;letter-spacing:.8px">1</span>
<div style="left:1904.5px;top:116px;width:15.5px;height:1019px;background:#353535;border-left:1px solid #303030"></div>
<svg style="left:1908.5px;top:124.25px;" width="9" height="5.5" viewBox="0 0 9 5.5"><path d="M0 5.5H9L4.5 0Z" fill="#c0c0c0"/></svg>
<svg style="left:1908.5px;top:1121.75px;" width="9" height="5.5" viewBox="0 0 9 5.5"><path d="M0 0H9L4.5 5.5Z" fill="#c0c0c0"/></svg>
<div style="left:1906.3px;top:184px;width:12.2px;height:672px;background:#5f5f5f;border-radius:6px"></div>
<!-- gen_proj -->
<div style="left:0px;top:817px;width:1109px;height:318px;background:#383838"></div>
<div class="tabbar" style="left:0px;top:817px;width:1109px;height:24px;"></div>
<div class="tab" style="left:0px;top:817px;width:100px;height:24px;border-radius:3px 3px 0 0"></div>
<svg style="left:8.5px;top:823.5px;" width="15" height="12" viewBox="0 0 14.5 12"><path d="M0 1.2Q0 0 1.2 0H5.2L6.8 1.8H13.3Q14.5 1.8 14.5 3V10.8Q14.5 12 13.3 12H1.2Q0 12 0 10.8Z" fill="#c2c2c2"/></svg>
<span class="t " style="left:28px;top:819.7px;letter-spacing:0.72px;">Project</span>
<svg style="left:113.8px;top:823.4px;" width="12.4" height="12.6" viewBox="0 0 12.4 12.6"><rect x="0" y="0" width="12.4" height="12.6" rx="1.2" fill="#c8c8c8"/><path d="M2 4.3H12.4M2 8.3H12.4" stroke="#282828" stroke-width="1.5"/></svg>
<span class="t " style="left:132px;top:819.7px;letter-spacing:0.49px;">Console</span>
<svg style="left:1065.8px;top:822.3px;" width="10.5" height="11.5" viewBox="0 0 10.5 11.5"><path d="M0.7 5.6H9.8V10.8H0.7Z" fill="none" stroke="#c4c4c4" stroke-width="1.3"/><path d="M2.7 5.6V3.2A2.4 2.4 0 0 1 7.5 3.2V3.8" fill="none" stroke="#c4c4c4" stroke-width="1.3"/></svg>
<svg style="left:1090.2px;top:822.2px;" width="4" height="12" viewBox="0 0 4 12"><circle cx="2" cy="1.8" r="1.35" fill="#c4c4c4"/><circle cx="2" cy="6" r="1.35" fill="#c4c4c4"/><circle cx="2" cy="10.2" r="1.35" fill="#c4c4c4"/></svg>
<div style="left:0px;top:841px;width:1109px;height:25px;background:#3c3c3c"></div>
<svg style="left:8.3px;top:846.7px;" width="15" height="15" viewBox="0 0 15 15"><path d="M7.5 0V15M0 7.5H15" stroke="#c4c4c4" stroke-width="2"/></svg>
<svg style="left:29.0px;top:850.85px;" width="9" height="5.5" viewBox="0 0 9 5.5"><path d="M0 0H9L4.5 5.5Z" fill="#c4c4c4"/></svg>
<div style="left:559.7px;top:844px;width:399px;height:20px;background:#272727;border:1px solid #1e1e1e;border-radius:5px"></div>
<div style="left:936.5px;top:845px;width:21.5px;height:18px;background:#303030;border-radius:0 4px 4px 0"></div>
<svg style="left:566px;top:849px;" width="10" height="10" viewBox="0 0 10 10"><circle cx="3.8" cy="3.8" r="2.7" fill="none" stroke="#b4b4b4" stroke-width="1.5"/><path d="M5.8 5.8L9.2 9.2" stroke="#b4b4b4" stroke-width="1.7"/></svg>
<svg style="left:939px;top:846px;" width="16" height="16" viewBox="0 0 16 16"><path d="M4 3.5H14.5V12.5H9" fill="none" stroke="#8c8c8c" stroke-width="1.2"/><path d="M1.5 9.5H6.5V14.5H1.5Z" fill="none" stroke="#8c8c8c" stroke-width="1.2"/><path d="M6.5 10L11.8 5.5M8.3 5.2H12.2V9" fill="none" stroke="#8c8c8c" stroke-width="1.2"/></svg>
<div style="left:961px;top:842px;width:1px;height:23px;background:#2c2c2c"></div>
<div style="left:992.7px;top:842px;width:1px;height:23px;background:#2c2c2c"></div>
<div style="left:1025.3px;top:842px;width:1px;height:23px;background:#2c2c2c"></div>
<div style="left:1057.7px;top:842px;width:1px;height:23px;background:#2c2c2c"></div>
<svg style="left:968.5px;top:845px;" width="15" height="17" viewBox="0 0 15 17"><rect x="1.2" y="0.5" width="6.6" height="6.6" fill="#c4c4c4"/><circle cx="4.4" cy="12.2" r="3.9" fill="#c4c4c4"/><path d="M10.8 3.4L14.6 10.4H7.6Z" fill="#c4c4c4"/></svg>
<svg style="left:1000.5px;top:847px;" width="15" height="14" viewBox="0 0 15 14"><path d="M8 0.6H13.6Q14.4 0.6 14.4 1.4V6.6L7 13.6L0.8 7.6Z" fill="#c4c4c4"/><circle cx="11.6" cy="3.4" r="1.3" fill="#3c3c3c"/></svg>
<svg style="left:1033px;top:846.5px;" width="16" height="15" viewBox="0 0 16 15"><path d="M8 0.3L10.1 5.3L15.6 5.8L11.4 9.4L12.7 14.7L8 11.9L3.3 14.7L4.6 9.4L0.4 5.8L5.9 5.3Z" fill="#9a9a9a"/></svg>
<svg style="left:1065px;top:846px;" width="20" height="15" viewBox="0 0 20 15"><path d="M1.5 8Q9.5 -0.5 17.5 7Q9.5 15 1.5 8Z" fill="none" stroke="#c4c4c4" stroke-width="1.4"/><circle cx="9.5" cy="7.4" r="2.3" fill="none" stroke="#c4c4c4" stroke-width="1.3"/><path d="M3 14L16 0.8" stroke="#c4c4c4" stroke-width="1.5"/></svg>
<span class="t " style="left:1086.7px;top:844px;letter-spacing:-0.60px;">17</span>
<div class="clip" style="left:0px;top:866px;width:144px;height:269px;background:#383838"></div>
<div class="clip" style="left:0;top:866px;width:144px;height:269px"><div style="left:0;top:-866px;width:144px;height:1161px"><div style="left:0px;top:1115px;width:127px;height:19px;background:#4d4d4d"></div><svg style="left:24.3px;top:859.0px;" width="8" height="10" viewBox="0 0 8 10"><path d="M0 0V10L8 5.0Z" fill="#6c6c6c"/></svg><svg style="left:40px;top:858.5px;" width="14.5" height="12" viewBox="0 0 14.5 12"><path d="M0 1.2Q0 0 1.2 0H5.2L6.8 1.8H13.3Q14.5 1.8 14.5 3V10.8Q14.5 12 13.3 12H1.2Q0 12 0 10.8Z" fill="#c2c2c2"/></svg><span class="t clip" style="left:60.6px;top:854.5px;width:65.69999999999999px;letter-spacing:.6px">Prefab</span><svg style="left:40px;top:878.5px;" width="14.5" height="12" viewBox="0 0 14.5 12"><path d="M0 1.2Q0 0 1.2 0H5.2L6.8 1.8H13.3Q14.5 1.8 14.5 3V10.8Q14.5 12 13.3 12H1.2Q0 12 0 10.8Z" fill="#c2c2c2"/></svg><span class="t clip" style="left:60.6px;top:874.5px;width:65.69999999999999px;letter-spacing:.6px">Rendering</span><svg style="left:40px;top:898.5px;" width="14.5" height="12" viewBox="0 0 14.5 12"><path d="M0 1.2Q0 0 1.2 0H5.2L6.8 1.8H13.3Q14.5 1.8 14.5 3V10.8Q14.5 12 13.3 12H1.2Q0 12 0 10.8Z" fill="#c2c2c2"/></svg><span class="t clip" style="left:60.6px;top:894.5px;width:65.69999999999999px;letter-spacing:.6px">RenderTextures</span><svg style="left:24.3px;top:919.0px;" width="8" height="10" viewBox="0 0 8 10"><path d="M0 0V10L8 5.0Z" fill="#6c6c6c"/></svg><svg style="left:40px;top:918.5px;" width="14.5" height="12" viewBox="0 0 14.5 12"><path d="M0 1.2Q0 0 1.2 0H5.2L6.8 1.8H13.3Q14.5 1.8 14.5 3V10.8Q14.5 12 13.3 12H1.2Q0 12 0 10.8Z" fill="#c2c2c2"/></svg><span class="t clip" style="left:60.6px;top:914.5px;width:65.69999999999999px;letter-spacing:.6px">Resources</span><svg style="left:24.3px;top:939.0px;" width="8" height="10" viewBox="0 0 8 10"><path d="M0 0V10L8 5.0Z" fill="#6c6c6c"/></svg><svg style="left:40px;top:938.5px;" width="14.5" height="12" viewBox="0 0 14.5 12"><path d="M0 1.2Q0 0 1.2 0H5.2L6.8 1.8H13.3Q14.5 1.8 14.5 3V10.8Q14.5 12 13.3 12H1.2Q0 12 0 10.8Z" fill="#c2c2c2"/></svg><span class="t clip" style="left:60.6px;top:934.5px;width:65.69999999999999px;letter-spacing:.6px">Samples</span><svg style="left:24.3px;top:959.0px;" width="8" height="10" viewBox="0 0 8 10"><path d="M0 0V10L8 5.0Z" fill="#6c6c6c"/></svg><svg style="left:40px;top:958.5px;" width="14.5" height="12" viewBox="0 0 14.5 12"><path d="M0 1.2Q0 0 1.2 0H5.2L6.8 1.8H13.3Q14.5 1.8 14.5 3V10.8Q14.5 12 13.3 12H1.2Q0 12 0 10.8Z" fill="#c2c2c2"/></svg><span class="t clip" style="left:60.6px;top:954.5px;width:65.69999999999999px;letter-spacing:.6px">Scenes</span><svg style="left:23.3px;top:980.25px;" width="10" height="8.5" viewBox="0 0 10 8.5"><path d="M0 0H10L5.0 8.5Z" fill="#6c6c6c"/></svg><svg style="left:40px;top:978px;" width="17.5" height="12.5" viewBox="0 0 17 12.3"><path d="M0.7 11V1.6Q0.7 0.7 1.6 0.7H5L6.5 2.4H12Q12.9 2.4 12.9 3.3V4.6" fill="none" stroke="#c2c2c2" stroke-width="1.4"/><path d="M3.6 5H16.6L13.6 12H0.6Z" fill="#c2c2c2"/></svg><span class="t clip" style="left:60.6px;top:974.5px;width:65.69999999999999px;letter-spacing:.6px">ScriptableObjects</span><svg style="left:40.0px;top:1000.25px;" width="10" height="8.5" viewBox="0 0 10 8.5"><path d="M0 0H10L5.0 8.5Z" fill="#6c6c6c"/></svg><svg style="left:57.5px;top:998px;" width="17.5" height="12.5" viewBox="0 0 17 12.3"><path d="M0.7 11V1.6Q0.7 0.7 1.6 0.7H5L6.5 2.4H12Q12.9 2.4 12.9 3.3V4.6" fill="none" stroke="#c2c2c2" stroke-width="1.4"/><path d="M3.6 5H16.6L13.6 12H0.6Z" fill="#c2c2c2"/></svg><span class="t clip" style="left:77.3px;top:994.5px;width:49.0px;letter-spacing:.6px">BoogieWoogie</span><svg style="left:75px;top:1018.5px;" width="14.5" height="12" viewBox="0 0 14.5 12"><path d="M0 1.2Q0 0 1.2 0H5.2L6.8 1.8H13.3Q14.5 1.8 14.5 3V10.8Q14.5 12 13.3 12H1.2Q0 12 0 10.8Z" fill="#c2c2c2"/></svg><span class="t clip" style="left:95.7px;top:1014.5px;width:30.599999999999994px;letter-spacing:.6px">Competition</span><svg style="left:75px;top:1038.5px;" width="14.5" height="12" viewBox="0 0 14.5 12"><path d="M0 1.2Q0 0 1.2 0H5.2L6.8 1.8H13.3Q14.5 1.8 14.5 3V10.8Q14.5 12 13.3 12H1.2Q0 12 0 10.8Z" fill="#c2c2c2"/></svg><span class="t clip" style="left:95.7px;top:1034.5px;width:30.599999999999994px;letter-spacing:.6px">Conditions</span><svg style="left:75px;top:1058.5px;" width="14.5" height="12" viewBox="0 0 14.5 12"><path d="M0 1.2Q0 0 1.2 0H5.2L6.8 1.8H13.3Q14.5 1.8 14.5 3V10.8Q14.5 12 13.3 12H1.2Q0 12 0 10.8Z" fill="#c2c2c2"/></svg><span class="t clip" style="left:95.7px;top:1054.5px;width:30.599999999999994px;letter-spacing:.6px">Events</span><svg style="left:75px;top:1078.5px;" width="14.5" height="12" viewBox="0 0 14.5 12"><path d="M0 1.2Q0 0 1.2 0H5.2L6.8 1.8H13.3Q14.5 1.8 14.5 3V10.8Q14.5 12 13.3 12H1.2Q0 12 0 10.8Z" fill="#c2c2c2"/></svg><span class="t clip" style="left:95.7px;top:1074.5px;width:30.599999999999994px;letter-spacing:.6px">Tutorials</span><svg style="left:59.5px;top:1099.0px;" width="8" height="10" viewBox="0 0 8 10"><path d="M0 0V10L8 5.0Z" fill="#6c6c6c"/></svg><svg style="left:75px;top:1098.5px;" width="14.5" height="12" viewBox="0 0 14.5 12"><path d="M0 1.2Q0 0 1.2 0H5.2L6.8 1.8H13.3Q14.5 1.8 14.5 3V10.8Q14.5 12 13.3 12H1.2Q0 12 0 10.8Z" fill="#c2c2c2"/></svg><span class="t clip" style="left:95.7px;top:1094.5px;width:30.599999999999994px;letter-spacing:.6px">Variables</span><svg style="left:40.0px;top:1120.25px;" width="10" height="8.5" viewBox="0 0 10 8.5"><path d="M0 0H10L5.0 8.5Z" fill="#6c6c6c"/></svg><svg style="left:57.5px;top:1118px;" width="17.5" height="12.5" viewBox="0 0 17 12.3"><path d="M0.7 11V1.6Q0.7 0.7 1.6 0.7H5L6.5 2.4H12Q12.9 2.4 12.9 3.3V4.6" fill="none" stroke="#c2c2c2" stroke-width="1.4"/><path d="M3.6 5H16.6L13.6 12H0.6Z" fill="#c2c2c2"/></svg><span class="t clip" style="left:77.3px;top:1114.5px;width:49.0px;letter-spacing:.6px">CompRGB</span></div></div>
<div style="left:129.5px;top:866px;width:14.5px;height:269px;background:#373737"></div>
<svg style="left:131.85px;top:874.85px;" width="9.5" height="5.5" viewBox="0 0 9.5 5.5"><path d="M0 5.5H9.5L4.75 0Z" fill="#c0c0c0"/></svg>
<svg style="left:131.85px;top:1122.45px;" width="9.5" height="5.5" viewBox="0 0 9.5 5.5"><path d="M0 0H9.5L4.75 5.5Z" fill="#c0c0c0"/></svg>
<div style="left:130.6px;top:937.5px;width:12px;height:41.5px;background:#5f5f5f;border-radius:6px"></div>
<div style="left:144px;top:866px;width:1.6px;height:269px;background:#242424"></div>
<div style="left:145.6px;top:866px;width:963.4px;height:269px;background:#333"></div>
<div style="left:145.6px;top:866px;width:963.4px;height:25.8px;background:#3f3f3f;border-bottom:1px solid #2c2c2c;border-top:1px solid #2a2a2a"></div>
<span class="t " style="left:150.6px;top:870px;letter-spacing:0.40px;color:#c4c4c4">Assets</span>
<svg style="left:206px;top:875.5px;" width="7" height="10" viewBox="0 0 7 10"><path d="M1 1L5.6 5L1 9" fill="none" stroke="#a8a8a8" stroke-width="1.4"/></svg>
<span class="t " style="left:220px;top:870px;letter-spacing:0.62px;color:#c4c4c4">ScriptableObjects</span>
<svg style="left:357px;top:875.5px;" width="7" height="10" viewBox="0 0 7 10"><path d="M1 1L5.6 5L1 9" fill="none" stroke="#a8a8a8" stroke-width="1.4"/></svg>
<span class="t b " style="left:371px;top:870px;letter-spacing:-0.14px;color:#dcdcdc">CompRGB</span>
<svg style="left:164.8px;top:890.3px;" width="19.2" height="19.2" viewBox="0 0 19.2 19.2"><circle cx="9.6" cy="9.6" r="9.5" fill="#14463c"/><circle cx="9.6" cy="9.6" r="7.9" fill="none" stroke="#4db59c" stroke-width="1.1" stroke-dasharray="9.4 3" stroke-dashoffset="2"/><text x="9.6" y="14.6" text-anchor="middle" font-family="Liberation Sans,sans-serif" font-weight="bold" font-size="14" fill="#fff">V</text></svg>
<span class="t " style="left:187.3px;top:889.5px;letter-spacing:0.41px;">CompRGBCurrentLevelIndex</span>
<svg style="left:166.6px;top:911.4px;" width="18.5" height="18.5" viewBox="0 0 18.5 18.5"><path d="M7.4 1L13.2 3.8V10.6L7.4 13.8L1.6 10.6V3.8Z" fill="#1d4560" stroke="#8ec4e0" stroke-width="1.15" stroke-linejoin="round"/><path d="M1.8 4L7.4 6.9L13 4M7.4 6.9V13.5" fill="none" stroke="#8ec4e0" stroke-width="1.15"/><circle cx="13.2" cy="12.4" r="4.2" fill="#333"/><path d="M12.5 8.8Q11 8.8 11.1 10.3Q11.2 12 10.1 12.3Q11.2 12.6 11.1 14.3Q11 15.8 12.5 15.8M14.1 8.8Q15.6 8.8 15.5 10.3Q15.4 12 16.5 12.3Q15.4 12.6 15.5 14.3Q15.6 15.8 14.1 15.8" fill="none" stroke="#b8562c" stroke-width="1.5"/></svg>
<span class="t " style="left:187.3px;top:909.5px;letter-spacing:0.40px;">CompRGBDebugSettings</span>
<svg style="left:164.8px;top:930.3px;" width="19.2" height="19.2" viewBox="0 0 19.2 19.2"><circle cx="9.6" cy="9.6" r="9.5" fill="#14463c"/><circle cx="9.6" cy="9.6" r="7.9" fill="none" stroke="#4db59c" stroke-width="1.1" stroke-dasharray="9.4 3" stroke-dashoffset="2"/><text x="9.6" y="14.6" text-anchor="middle" font-family="Liberation Sans,sans-serif" font-weight="bold" font-size="14" fill="#fff">V</text></svg>
<span class="t " style="left:187.3px;top:929.5px;letter-spacing:0.40px;">CompRGBEnableTutorials</span>
<svg style="left:164.8px;top:950.3px;" width="19.2" height="19.2" viewBox="0 0 19.2 19.2"><circle cx="9.6" cy="9.6" r="9.5" fill="#4a1620"/><circle cx="9.6" cy="9.6" r="7.9" fill="none" stroke="#c2505e" stroke-width="1.1" stroke-dasharray="9.4 3" stroke-dashoffset="2"/><text x="9.7" y="14.2" text-anchor="middle" font-family="Liberation Sans,sans-serif" font-weight="bold" font-size="13" fill="#fff">E</text></svg>
<span class="t " style="left:187.3px;top:949.5px;letter-spacing:0.44px;">CompRGBEnableTutorialsChanged</span>
<svg style="left:166.6px;top:971.4px;" width="18.5" height="18.5" viewBox="0 0 18.5 18.5"><path d="M7.4 1L13.2 3.8V10.6L7.4 13.8L1.6 10.6V3.8Z" fill="#1d4560" stroke="#8ec4e0" stroke-width="1.15" stroke-linejoin="round"/><path d="M1.8 4L7.4 6.9L13 4M7.4 6.9V13.5" fill="none" stroke="#8ec4e0" stroke-width="1.15"/><circle cx="13.2" cy="12.4" r="4.2" fill="#333"/><path d="M12.5 8.8Q11 8.8 11.1 10.3Q11.2 12 10.1 12.3Q11.2 12.6 11.1 14.3Q11 15.8 12.5 15.8M14.1 8.8Q15.6 8.8 15.5 10.3Q15.4 12 16.5 12.3Q15.4 12.6 15.5 14.3Q15.6 15.8 14.1 15.8" fill="none" stroke="#b8562c" stroke-width="1.5"/></svg>
<span class="t " style="left:187.3px;top:969.5px;letter-spacing:0.33px;">CompRGBGameSettings</span>
<svg style="left:166.6px;top:991.4px;" width="18.5" height="18.5" viewBox="0 0 18.5 18.5"><path d="M7.4 1L13.2 3.8V10.6L7.4 13.8L1.6 10.6V3.8Z" fill="#1d4560" stroke="#8ec4e0" stroke-width="1.15" stroke-linejoin="round"/><path d="M1.8 4L7.4 6.9L13 4M7.4 6.9V13.5" fill="none" stroke="#8ec4e0" stroke-width="1.15"/><circle cx="13.2" cy="12.4" r="4.2" fill="#333"/><path d="M12.5 8.8Q11 8.8 11.1 10.3Q11.2 12 10.1 12.3Q11.2 12.6 11.1 14.3Q11 15.8 12.5 15.8M14.1 8.8Q15.6 8.8 15.5 10.3Q15.4 12 16.5 12.3Q15.4 12.6 15.5 14.3Q15.6 15.8 14.1 15.8" fill="none" stroke="#b8562c" stroke-width="1.5"/></svg>
<span class="t " style="left:187.3px;top:989.5px;letter-spacing:0.40px;">CompRGBLevelData</span>
<svg style="left:166.6px;top:1011.4px;" width="18.5" height="18.5" viewBox="0 0 18.5 18.5"><path d="M7.4 1L13.2 3.8V10.6L7.4 13.8L1.6 10.6V3.8Z" fill="#1d4560" stroke="#8ec4e0" stroke-width="1.15" stroke-linejoin="round"/><path d="M1.8 4L7.4 6.9L13 4M7.4 6.9V13.5" fill="none" stroke="#8ec4e0" stroke-width="1.15"/><circle cx="13.2" cy="12.4" r="4.2" fill="#333"/><path d="M12.5 8.8Q11 8.8 11.1 10.3Q11.2 12 10.1 12.3Q11.2 12.6 11.1 14.3Q11 15.8 12.5 15.8M14.1 8.8Q15.6 8.8 15.5 10.3Q15.4 12 16.5 12.3Q15.4 12.6 15.5 14.3Q15.6 15.8 14.1 15.8" fill="none" stroke="#b8562c" stroke-width="1.5"/></svg>
<span class="t " style="left:187.3px;top:1009.5px;letter-spacing:0.40px;">CompRGBLevelDataEditorData</span>
<svg style="left:164.8px;top:1030.3px;" width="19.2" height="19.2" viewBox="0 0 19.2 19.2"><circle cx="9.6" cy="9.6" r="9.5" fill="#4a1620"/><circle cx="9.6" cy="9.6" r="7.9" fill="none" stroke="#c2505e" stroke-width="1.1" stroke-dasharray="9.4 3" stroke-dashoffset="2"/><text x="9.7" y="14.2" text-anchor="middle" font-family="Liberation Sans,sans-serif" font-weight="bold" font-size="13" fill="#fff">E</text></svg>
<span class="t " style="left:187.3px;top:1029.5px;letter-spacing:0.43px;">CompRGBOnLevelLoadRequest</span>
<svg style="left:166.6px;top:1051.4px;" width="18.5" height="18.5" viewBox="0 0 18.5 18.5"><path d="M7.4 1L13.2 3.8V10.6L7.4 13.8L1.6 10.6V3.8Z" fill="#1d4560" stroke="#8ec4e0" stroke-width="1.15" stroke-linejoin="round"/><path d="M1.8 4L7.4 6.9L13 4M7.4 6.9V13.5" fill="none" stroke="#8ec4e0" stroke-width="1.15"/><circle cx="13.2" cy="12.4" r="4.2" fill="#333"/><path d="M12.5 8.8Q11 8.8 11.1 10.3Q11.2 12 10.1 12.3Q11.2 12.6 11.1 14.3Q11 15.8 12.5 15.8M14.1 8.8Q15.6 8.8 15.5 10.3Q15.4 12 16.5 12.3Q15.4 12.6 15.5 14.3Q15.6 15.8 14.1 15.8" fill="none" stroke="#b8562c" stroke-width="1.5"/></svg>
<span class="t " style="left:187.3px;top:1049.5px;letter-spacing:0.41px;">CompRGBVisualSettings</span>
<svg style="left:166.6px;top:1071.4px;" width="18.5" height="18.5" viewBox="0 0 18.5 18.5"><path d="M7.4 1L13.2 3.8V10.6L7.4 13.8L1.6 10.6V3.8Z" fill="#1d4560" stroke="#8ec4e0" stroke-width="1.15" stroke-linejoin="round"/><path d="M1.8 4L7.4 6.9L13 4M7.4 6.9V13.5" fill="none" stroke="#8ec4e0" stroke-width="1.15"/><circle cx="13.2" cy="12.4" r="4.2" fill="#333"/><path d="M12.5 8.8Q11 8.8 11.1 10.3Q11.2 12 10.1 12.3Q11.2 12.6 11.1 14.3Q11 15.8 12.5 15.8M14.1 8.8Q15.6 8.8 15.5 10.3Q15.4 12 16.5 12.3Q15.4 12.6 15.5 14.3Q15.6 15.8 14.1 15.8" fill="none" stroke="#b8562c" stroke-width="1.5"/></svg>
<span class="t " style="left:187.3px;top:1069.5px;letter-spacing:0.38px;">CompRGBVisualSetupData</span>
<svg style="left:166.6px;top:1091.4px;" width="18.5" height="18.5" viewBox="0 0 18.5 18.5"><path d="M7.4 1L13.2 3.8V10.6L7.4 13.8L1.6 10.6V3.8Z" fill="#1d4560" stroke="#8ec4e0" stroke-width="1.15" stroke-linejoin="round"/><path d="M1.8 4L7.4 6.9L13 4M7.4 6.9V13.5" fill="none" stroke="#8ec4e0" stroke-width="1.15"/><circle cx="13.2" cy="12.4" r="4.2" fill="#333"/><path d="M12.5 8.8Q11 8.8 11.1 10.3Q11.2 12 10.1 12.3Q11.2 12.6 11.1 14.3Q11 15.8 12.5 15.8M14.1 8.8Q15.6 8.8 15.5 10.3Q15.4 12 16.5 12.3Q15.4 12.6 15.5 14.3Q15.6 15.8 14.1 15.8" fill="none" stroke="#b8562c" stroke-width="1.5"/></svg>
<span class="t " style="left:187.3px;top:1089.5px;letter-spacing:0.52px;">PlayFieldCamRef</span>
<div style="left:1094px;top:892px;width:15px;height:218px;background:#303030"></div>
<svg style="left:1096.75px;top:900.55px;" width="9.5" height="5.5" viewBox="0 0 9.5 5.5"><path d="M0 5.5H9.5L4.75 0Z" fill="#c0c0c0"/></svg>
<svg style="left:1096.75px;top:1097.25px;" width="9.5" height="5.5" viewBox="0 0 9.5 5.5"><path d="M0 0H9.5L4.75 5.5Z" fill="#c0c0c0"/></svg>
<div style="left:1095.3px;top:981px;width:12.5px;height:108px;background:#5f5f5f;border-radius:6px"></div>
<div style="left:145.6px;top:1110.7px;width:963.4px;height:24.3px;background:#414141"></div>
<svg style="left:148.6px;top:1112.5px;" width="19.2" height="19.2" viewBox="0 0 19.2 19.2"><circle cx="9.6" cy="9.6" r="9.5" fill="#14463c"/><circle cx="9.6" cy="9.6" r="7.9" fill="none" stroke="#4db59c" stroke-width="1.1" stroke-dasharray="9.4 3" stroke-dashoffset="2"/><text x="9.6" y="14.6" text-anchor="middle" font-family="Liberation Sans,sans-serif" font-weight="bold" font-size="14" fill="#fff">V</text></svg>
<span class="t " style="left:170.7px;top:1112.2px;letter-spacing:0.56px;">Assets/ScriptableObjects/ColorBlindModeEnabled.asset</span>
<div style="left:1031px;top:1121.6px;width:58px;height:1.8px;background:#5e5e5e;border-radius:1px"></div>
<div style="left:1020px;top:1116.4px;width:12px;height:12px;background:#a8a8a8;border-radius:6px"></div>
<div style="left:0px;top:1135px;width:1920px;height:26px;background:#191919"></div>
<svg style="left:3px;top:1139px;" width="18" height="19" viewBox="0 0 18 19"><path d="M9 0.5A8 8 0 0 1 9 16.5Q6 16.5 4.4 15.4L1 18.5L2.4 13.6A8 8 0 0 1 9 0.5Z" fill="#e8e8e8"/><path d="M9 4V10" stroke="#191919" stroke-width="2.2"/><circle cx="9" cy="12.8" r="1.3" fill="#191919"/></svg>
<span class="t " style="left:25px;top:1139.5px;letter-spacing:0.59px;color:#c8c8c8">[GenerateTargets] Max encountered crossings: 3</span>
<svg style="left:1827px;top:1139.5px;" width="19" height="20" viewBox="0 0 19 20"><ellipse cx="8.2" cy="11.5" rx="4.6" ry="6.6" fill="#f5c21b"/><circle cx="8.2" cy="4.6" r="2.6" fill="#f5c21b"/><path d="M5.2 2L3.2 0.4M11.2 2L13.2 0.4M3.8 8L0.8 6.2M3.4 12H0.3M3.8 15.6L1 18M12.6 8L15.6 6.2M12.8 15.6L15 18" stroke="#f5c21b" stroke-width="1.4" fill="none"/><path d="M8.2 6.5V18" stroke="#8a6a00" stroke-width="1"/><path d="M14.2 7.5V14.2" stroke="#191919" stroke-width="4.4"/><path d="M14.2 8V14" stroke="#f3e6a8" stroke-width="2.2"/><circle cx="14.2" cy="17.2" r="2.2" fill="#191919"/><circle cx="14.2" cy="17.2" r="1.3" fill="#f3e6a8"/></svg>
<svg style="left:1861px;top:1139.5px;" width="19" height="20" viewBox="0 0 19 20"><ellipse cx="9.5" cy="5" rx="6.6" ry="3" fill="#d8d8d8"/><path d="M2.9 8.2Q9.5 12.4 16.1 8.2V10.4Q9.5 14.6 2.9 10.4ZM2.9 12.6Q9.5 16.8 16.1 12.6V14.8Q9.5 19 2.9 14.8Z" fill="#d8d8d8"/><path d="M2 1L18 19" stroke="#191919" stroke-width="3.4"/><path d="M2.8 1.2L18.2 18.6" stroke="#d8d8d8" stroke-width="1.4"/></svg>
<svg style="left:1892.5px;top:1140.5px;" width="19" height="19" viewBox="0 0 19 19"><circle cx="9.5" cy="9.5" r="8.2" fill="none" stroke="#d0d0d0" stroke-width="1.4"/><path d="M5.4 9.6L8.4 12.6L13.8 6.8" fill="none" stroke="#e4e4e4" stroke-width="2"/></svg>
</div>
</body></html>
